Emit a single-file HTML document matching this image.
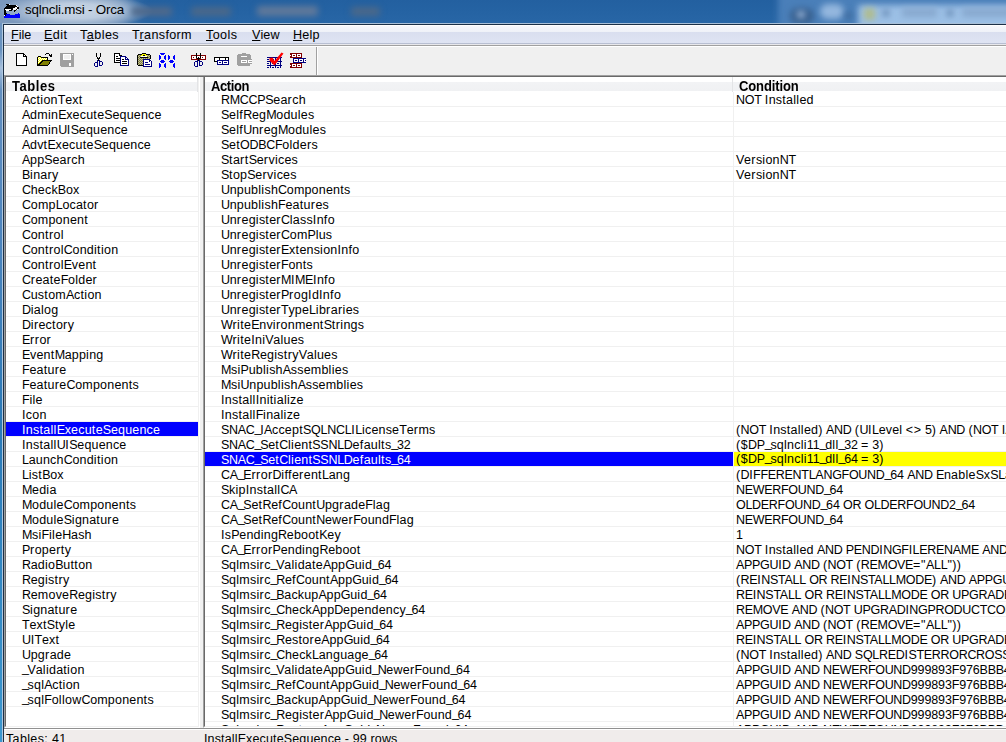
<!DOCTYPE html>
<html><head><meta charset="utf-8"><style>
*{margin:0;padding:0;box-sizing:border-box}
html,body{width:1006px;height:742px;overflow:hidden;background:#f0f0f0;font-family:"Liberation Sans",sans-serif;position:relative}
.a{position:absolute}
#title{left:0;top:0;width:1006px;height:23px;overflow:hidden;background:linear-gradient(180deg,#2360a0 0,#2563a3 12px,#2866a6 23px)}
.bl{position:absolute;filter:blur(3px)}
#title .t{left:25px;top:2px;letter-spacing:-0.2px;font-size:13.4px;color:#000;white-space:nowrap}
#frameL{left:0;top:23px;width:3px;height:719px;background:linear-gradient(180deg,#6c94c0 0,#4f86bf 200px,#2a7ab8 400px,#3d9ad2 740px)}
#frameL2{left:2px;top:23px;width:1px;height:719px;background:#b0c8e0}
#frameH{left:2px;top:23px;width:1004px;height:1px;background:#a9c0d8}
#frameD{left:3px;top:24px;width:1003px;height:1px;background:#1c3048}
#frameD2{left:3px;top:24px;width:1px;height:718px;background:#1c3048}
#menu{left:4px;top:25px;width:1002px;height:20px;background:linear-gradient(180deg,#fff 0,#fff 1px,#f7f8fc 1px,#eef1f8 7px,#d9deef 7px,#dfe4f3 18px,#b8bfd2 18px,#b8bfd2 19px,#e8e8ec 19px)}
#menu span{position:absolute;top:3px;font-size:12.6px;color:#000;white-space:nowrap}
#menu u{text-decoration:underline;text-underline-offset:1px;text-decoration-thickness:1px}
#mline{left:4px;top:45px;width:1002px;height:1px;background:#a0a0a0}
#mline2{left:4px;top:46px;width:1002px;height:1px;background:#fff}
#tsep{left:316px;top:47px;width:1px;height:28px;background:#a0a0a0}
#tsep2{left:317px;top:47px;width:1px;height:28px;background:#fff}
.pane{top:75px;height:653px;background:#fff;border-top:1px solid #a0a0a0;border-left:1px solid #a0a0a0;border-right:1px solid #fff;border-bottom:1px solid #fff;overflow:hidden}
.pin{position:absolute;left:0;top:0;right:0;bottom:0;border-top:1px solid #696969;border-left:1px solid #696969;border-right:1px solid #f0f0f0;border-bottom:1px solid #f0f0f0;overflow:hidden}
#lp{left:4px;width:196px}
#rp{left:203px;width:900px}
.hd{position:absolute;left:0;top:0;height:15px;right:0;background:linear-gradient(180deg,#fff 0,#fff 5px,#f2f3f5 5px,#f0f1f3 14px,#fff 14px)}
.hd b{position:absolute;top:0.6px;transform:scaleY(1.1);transform-origin:0 0;font-size:13px;font-weight:bold;color:#000;white-space:nowrap}
.hdv{position:absolute;top:0;width:1px;height:15px;background:#e3e4e6}
.r{position:absolute;left:0;right:0;height:15px;border-bottom:1px solid #f0f0f0;font-size:12.5px;color:#000;white-space:nowrap}
.r span{position:absolute;top:1px;line-height:14px}
i{font-style:normal}
.r.sel{background:#0000ff;color:#fff;border-bottom-color:#f0f0f0}
#rp .r span.c1{left:16px}
#rp .r span.c2{left:531px}
#rp .r.sel span.c2{left:529px;padding-left:2px;right:0;background:#ffff00;color:#000;height:14px;top:0}
.vgrid{position:absolute;top:15px;width:1px;bottom:0;background:#f0f0f0}
#lsplit{left:200px;top:75px;width:3px;height:653px;background:linear-gradient(180deg,#a0a0a0 0,#a0a0a0 1px,#696969 1px,#696969 2px,#f0f0f0 2px)}
#sb3{left:4px;top:728px;width:1002px;height:1px;background:#909090}
#sb4{left:4px;top:729px;width:1002px;height:1px;background:#fff}
#sb{left:4px;top:730px;width:1002px;height:12px;background:#f0eceb;overflow:hidden}
#sb span{position:absolute;top:2px;font-size:12.5px;color:#000;white-space:nowrap}
</style></head><body>
<div id="title" class="a">
  <div class="bl" style="left:-30px;top:-10px;width:172px;height:45px;filter:blur(5px);background:linear-gradient(90deg,#7a97bb 0,#7d9abd 130px,#6a8db6 150px,rgba(37,99,163,0) 172px)"></div>
  <div class="a" style="left:-10px;top:-12px;width:170px;height:46px;background:radial-gradient(ellipse 78px 17px at 85px 23px,rgba(200,214,230,1) 0%,rgba(192,207,225,0.95) 45%,rgba(170,190,214,0.6) 75%,rgba(140,165,198,0) 100%)"></div>
  <div class="bl" style="left:131px;top:7px;width:41px;height:9px;background:#50698a;border-radius:3px"></div>
  <div class="bl" style="left:191px;top:7px;width:40px;height:9px;background:#4b6889;border-radius:3px"></div>
  <div class="bl" style="left:257px;top:6px;width:61px;height:10px;background:#61799a;border-radius:3px"></div>
  <div class="bl" style="left:351px;top:7px;width:29px;height:9px;background:#4b6889;border-radius:3px"></div>
  <div class="bl" style="left:778px;top:-10px;width:260px;height:45px;background:#4a7fb9"></div>
  <div class="bl" style="left:858px;top:5px;width:170px;height:30px;background:#9cc0e6"></div>
  <div class="bl" style="left:790px;top:8px;width:24px;height:16px;background:#38608f;border-radius:10px"></div>
  <div class="bl" style="left:797px;top:11px;width:8px;height:7px;background:#9fbadd;border-radius:4px"></div>
  <div class="bl" style="left:820px;top:4px;width:24px;height:15px;background:#94b7de;border-radius:10px"></div>
  <div class="bl" style="left:845px;top:12px;width:7px;height:7px;background:#3f6a9c"></div>
  <div class="bl" style="left:864px;top:8px;width:11px;height:12px;background:#b0bc8c"></div>
  <div class="bl" style="left:883px;top:10px;width:6px;height:6px;background:#5e80aa"></div>
  <div class="bl" style="left:902px;top:8px;width:35px;height:9px;background:#87a8ce"></div>
  <div class="bl" style="left:947px;top:10px;width:6px;height:6px;background:#5e80aa"></div>
  <div class="bl" style="left:962px;top:8px;width:50px;height:9px;background:#87a8ce"></div>
  <svg class="a" style="left:4px;top:4px" width="16" height="14" viewBox="0 0 16 14" shape-rendering="crispEdges"><rect x="2" y="0" width="3" height="1" fill="#000"/><rect x="5" y="0" width="1" height="1" fill="#fff"/><rect x="3" y="1" width="9" height="1" fill="#000"/><rect x="12" y="1" width="1" height="1" fill="#fff"/><rect x="2" y="2" width="11" height="1" fill="#000"/><rect x="13" y="2" width="1" height="1" fill="#fff"/><rect x="1" y="3" width="10" height="1" fill="#000"/><rect x="11" y="3" width="2" height="1" fill="#fff"/><rect x="13" y="3" width="2" height="1" fill="#000"/><rect x="0" y="4" width="9" height="1" fill="#000"/><rect x="9" y="4" width="4" height="1" fill="#fff"/><rect x="13" y="4" width="2" height="1" fill="#000"/><rect x="0" y="5" width="1" height="1" fill="#000"/><rect x="1" y="5" width="6" height="1" fill="#fff"/><rect x="7" y="5" width="2" height="1" fill="#000"/><rect x="9" y="5" width="3" height="1" fill="#fff"/><rect x="12" y="5" width="1" height="1" fill="#000"/><rect x="13" y="5" width="1" height="1" fill="#fff"/><rect x="0" y="6" width="2" height="1" fill="#000"/><rect x="2" y="6" width="3" height="1" fill="#fff"/><rect x="5" y="6" width="3" height="1" fill="#000"/><rect x="10" y="6" width="2" height="1" fill="#000"/><rect x="0" y="7" width="2" height="1" fill="#000"/><rect x="10" y="7" width="1" height="1" fill="#000"/><rect x="0" y="8" width="2" height="1" fill="#000"/><rect x="0" y="9" width="3" height="1" fill="#000"/><rect x="14" y="9" width="1" height="1" fill="#0000ff"/><rect x="0" y="10" width="2" height="1" fill="#000"/><rect x="2" y="10" width="4" height="1" fill="#0000ff"/><rect x="11" y="10" width="5" height="1" fill="#0000ff"/><rect x="0" y="11" width="1" height="1" fill="#fff"/><rect x="1" y="11" width="1" height="1" fill="#000"/><rect x="2" y="11" width="14" height="1" fill="#0000ff"/><rect x="0" y="12" width="16" height="1" fill="#0000ff"/><rect x="0" y="13" width="16" height="1" fill="#0000ff"/></svg>
  <div class="a t">sqlncli.msi - Orca</div>
</div>
<div id="frameL" class="a"></div>
<div class="a" style="left:0;top:50px;width:2px;height:40px;background:linear-gradient(180deg,rgba(168,192,220,0) 0,#a6bfdc 45%,rgba(168,192,220,0) 100%)"></div>
<div id="frameL2" class="a"></div>
<div id="frameH" class="a"></div>
<div id="frameD" class="a"></div>
<div id="frameD2" class="a"></div>
<div id="menu" class="a">
  <span style="left:7px"><u>F</u>ile</span>
  <span style="left:40px;letter-spacing:0.4px"><u>E</u>dit</span>
  <span style="left:76px;letter-spacing:0.45px">T<u>a</u>bles</span>
  <span style="left:128px;letter-spacing:0.33px">T<u>r</u>ansform</span>
  <span style="left:202px;letter-spacing:0.4px"><u>T</u>ools</span>
  <span style="left:248px;letter-spacing:0.2px"><u>V</u>iew</span>
  <span style="left:289px;letter-spacing:0.2px"><u>H</u>elp</span>
</div>
<div id="mline" class="a"></div>
<div id="mline2" class="a"></div>
<svg class="a" style="left:0;top:47px" width="320" height="28" viewBox="0 47 320 28" shape-rendering="crispEdges"><rect x="17" y="54" width="9" height="11" fill="#fff"/><rect x="16" y="53" width="8" height="1" fill="#000"/><rect x="16" y="53" width="1" height="13" fill="#000"/><rect x="16" y="65" width="11" height="1" fill="#000"/><rect x="26" y="56" width="1" height="10" fill="#000"/><rect x="23" y="53" width="3" height="3" fill="#f0f0f0"/><rect x="24" y="53" width="1" height="1" fill="#f0f0f0"/><rect x="23" y="53" width="1" height="4" fill="#000"/><rect x="23" y="56" width="4" height="1" fill="#000"/><rect x="24" y="54" width="1" height="1" fill="#000"/><rect x="25" y="55" width="1" height="1" fill="#000"/><rect x="24" y="55" width="1" height="1" fill="#fff"/><rect x="45" y="54" width="1" height="1" fill="#000"/><rect x="46" y="53" width="1" height="1" fill="#000"/><rect x="47" y="53" width="1" height="1" fill="#000"/><rect x="48" y="53" width="1" height="1" fill="#000"/><rect x="49" y="54" width="1" height="1" fill="#000"/><rect x="49" y="55" width="3" height="1" fill="#000"/><rect x="50" y="56" width="2" height="1" fill="#000"/><rect x="51" y="54" width="1" height="1" fill="#000"/><rect x="38" y="57" width="9" height="7" fill="#ffff00"/><rect x="39" y="57" width="1" height="1" fill="#fff"/><rect x="41" y="57" width="1" height="1" fill="#fff"/><rect x="43" y="57" width="1" height="1" fill="#fff"/><rect x="45" y="57" width="1" height="1" fill="#fff"/><rect x="38" y="58" width="1" height="1" fill="#fff"/><rect x="40" y="58" width="1" height="1" fill="#fff"/><rect x="42" y="58" width="1" height="1" fill="#fff"/><rect x="44" y="58" width="1" height="1" fill="#fff"/><rect x="46" y="58" width="1" height="1" fill="#fff"/><rect x="39" y="59" width="1" height="1" fill="#fff"/><rect x="41" y="59" width="1" height="1" fill="#fff"/><rect x="43" y="59" width="1" height="1" fill="#fff"/><rect x="45" y="59" width="1" height="1" fill="#fff"/><rect x="38" y="60" width="1" height="1" fill="#fff"/><rect x="40" y="60" width="1" height="1" fill="#fff"/><rect x="42" y="60" width="1" height="1" fill="#fff"/><rect x="44" y="60" width="1" height="1" fill="#fff"/><rect x="46" y="60" width="1" height="1" fill="#fff"/><rect x="39" y="61" width="1" height="1" fill="#fff"/><rect x="41" y="61" width="1" height="1" fill="#fff"/><rect x="43" y="61" width="1" height="1" fill="#fff"/><rect x="45" y="61" width="1" height="1" fill="#fff"/><rect x="38" y="62" width="1" height="1" fill="#fff"/><rect x="40" y="62" width="1" height="1" fill="#fff"/><rect x="42" y="62" width="1" height="1" fill="#fff"/><rect x="44" y="62" width="1" height="1" fill="#fff"/><rect x="46" y="62" width="1" height="1" fill="#fff"/><rect x="39" y="63" width="1" height="1" fill="#fff"/><rect x="41" y="63" width="1" height="1" fill="#fff"/><rect x="43" y="63" width="1" height="1" fill="#fff"/><rect x="45" y="63" width="1" height="1" fill="#fff"/><rect x="37" y="57" width="1" height="9" fill="#000"/><rect x="38" y="56" width="3" height="1" fill="#000"/><rect x="41" y="57" width="7" height="1" fill="#000"/><rect x="47" y="57" width="1" height="4" fill="#000"/><polygon points="42,60 52,60 48,66 37,66" fill="#000"/><polygon points="43,61 50.5,61 47.5,65 39.5,65" fill="#808000"/><rect x="60" y="53" width="14" height="14" fill="#a0a0a0"/><rect x="60" y="66" width="1" height="1" fill="#f0f0f0"/><rect x="63" y="54" width="8" height="6" fill="#f0f0f0"/><rect x="63" y="54" width="8" height="1" fill="#fff"/><rect x="63" y="59" width="8" height="1" fill="#fff"/><rect x="63" y="54" width="1" height="6" fill="#fff"/><rect x="70" y="54" width="1" height="6" fill="#fff"/><rect x="72" y="54" width="1" height="1" fill="#fff"/><rect x="69" y="63" width="2" height="3" fill="#fff"/><rect x="96" y="53" width="1" height="4" fill="#000"/><rect x="100" y="53" width="1" height="4" fill="#000"/><rect x="97" y="57" width="1" height="1" fill="#000"/><rect x="99" y="57" width="1" height="1" fill="#000"/><rect x="97" y="58" width="1" height="1" fill="#000"/><rect x="99" y="58" width="1" height="1" fill="#000"/><rect x="98" y="58" width="1" height="3" fill="#000"/><rect x="97" y="60" width="1" height="2" fill="#000080"/><rect x="99" y="60" width="1" height="1" fill="#000080"/><rect x="94" y="62" width="4" height="1" fill="#000080"/><rect x="94" y="66" width="4" height="1" fill="#000080"/><rect x="94" y="62" width="1" height="5" fill="#000080"/><rect x="97" y="62" width="1" height="5" fill="#000080"/><rect x="94" y="62" width="1" height="1" fill="#f0f0f0"/><rect x="94" y="66" width="1" height="1" fill="#f0f0f0"/><rect x="99" y="61" width="4" height="1" fill="#000080"/><rect x="99" y="65" width="4" height="1" fill="#000080"/><rect x="99" y="61" width="1" height="5" fill="#000080"/><rect x="102" y="61" width="1" height="5" fill="#000080"/><rect x="102" y="61" width="1" height="1" fill="#f0f0f0"/><rect x="102" y="65" width="1" height="1" fill="#f0f0f0"/><rect x="114" y="53" width="8" height="10" fill="#fff"/><rect x="114" y="53" width="8" height="1" fill="#000"/><rect x="114" y="62" width="8" height="1" fill="#000"/><rect x="114" y="53" width="1" height="10" fill="#000"/><rect x="121" y="53" width="1" height="10" fill="#000"/><rect x="120" y="53" width="2" height="2" fill="#f0f0f0"/><rect x="119" y="54" width="1" height="1" fill="#000"/><rect x="120" y="55" width="1" height="1" fill="#000"/><rect x="119" y="53" width="1" height="3" fill="#000"/><rect x="116" y="56" width="2" height="1" fill="#000"/><rect x="116" y="58" width="4" height="1" fill="#000"/><rect x="116" y="60" width="4" height="1" fill="#000"/><rect x="120" y="56" width="9" height="10" fill="#fff"/><rect x="120" y="56" width="9" height="1" fill="#000080"/><rect x="120" y="65" width="9" height="1" fill="#000080"/><rect x="120" y="56" width="1" height="10" fill="#000080"/><rect x="128" y="56" width="1" height="10" fill="#000080"/><rect x="126" y="56" width="3" height="3" fill="#f0f0f0"/><rect x="126" y="57" width="1" height="1" fill="#000080"/><rect x="127" y="58" width="1" height="1" fill="#000080"/><rect x="125" y="56" width="1" height="4" fill="#000080"/><rect x="125" y="59" width="4" height="1" fill="#000080"/><rect x="126" y="58" width="1" height="1" fill="#fff"/><rect x="122" y="59" width="2" height="1" fill="#000"/><rect x="122" y="61" width="5" height="1" fill="#000"/><rect x="122" y="63" width="5" height="1" fill="#000"/><rect x="138" y="55" width="12" height="10" fill="#848030"/><rect x="139" y="55" width="1" height="1" fill="#b8b8a0"/><rect x="141" y="55" width="1" height="1" fill="#b8b8a0"/><rect x="143" y="55" width="1" height="1" fill="#b8b8a0"/><rect x="145" y="55" width="1" height="1" fill="#b8b8a0"/><rect x="147" y="55" width="1" height="1" fill="#b8b8a0"/><rect x="149" y="55" width="1" height="1" fill="#b8b8a0"/><rect x="138" y="56" width="1" height="1" fill="#b8b8a0"/><rect x="140" y="56" width="1" height="1" fill="#b8b8a0"/><rect x="142" y="56" width="1" height="1" fill="#b8b8a0"/><rect x="144" y="56" width="1" height="1" fill="#b8b8a0"/><rect x="146" y="56" width="1" height="1" fill="#b8b8a0"/><rect x="148" y="56" width="1" height="1" fill="#b8b8a0"/><rect x="139" y="57" width="1" height="1" fill="#b8b8a0"/><rect x="141" y="57" width="1" height="1" fill="#b8b8a0"/><rect x="143" y="57" width="1" height="1" fill="#b8b8a0"/><rect x="145" y="57" width="1" height="1" fill="#b8b8a0"/><rect x="147" y="57" width="1" height="1" fill="#b8b8a0"/><rect x="149" y="57" width="1" height="1" fill="#b8b8a0"/><rect x="138" y="58" width="1" height="1" fill="#b8b8a0"/><rect x="140" y="58" width="1" height="1" fill="#b8b8a0"/><rect x="142" y="58" width="1" height="1" fill="#b8b8a0"/><rect x="144" y="58" width="1" height="1" fill="#b8b8a0"/><rect x="146" y="58" width="1" height="1" fill="#b8b8a0"/><rect x="148" y="58" width="1" height="1" fill="#b8b8a0"/><rect x="139" y="59" width="1" height="1" fill="#b8b8a0"/><rect x="141" y="59" width="1" height="1" fill="#b8b8a0"/><rect x="143" y="59" width="1" height="1" fill="#b8b8a0"/><rect x="145" y="59" width="1" height="1" fill="#b8b8a0"/><rect x="147" y="59" width="1" height="1" fill="#b8b8a0"/><rect x="149" y="59" width="1" height="1" fill="#b8b8a0"/><rect x="138" y="60" width="1" height="1" fill="#b8b8a0"/><rect x="140" y="60" width="1" height="1" fill="#b8b8a0"/><rect x="142" y="60" width="1" height="1" fill="#b8b8a0"/><rect x="144" y="60" width="1" height="1" fill="#b8b8a0"/><rect x="146" y="60" width="1" height="1" fill="#b8b8a0"/><rect x="148" y="60" width="1" height="1" fill="#b8b8a0"/><rect x="139" y="61" width="1" height="1" fill="#b8b8a0"/><rect x="141" y="61" width="1" height="1" fill="#b8b8a0"/><rect x="143" y="61" width="1" height="1" fill="#b8b8a0"/><rect x="145" y="61" width="1" height="1" fill="#b8b8a0"/><rect x="147" y="61" width="1" height="1" fill="#b8b8a0"/><rect x="149" y="61" width="1" height="1" fill="#b8b8a0"/><rect x="138" y="62" width="1" height="1" fill="#b8b8a0"/><rect x="140" y="62" width="1" height="1" fill="#b8b8a0"/><rect x="142" y="62" width="1" height="1" fill="#b8b8a0"/><rect x="144" y="62" width="1" height="1" fill="#b8b8a0"/><rect x="146" y="62" width="1" height="1" fill="#b8b8a0"/><rect x="148" y="62" width="1" height="1" fill="#b8b8a0"/><rect x="139" y="63" width="1" height="1" fill="#b8b8a0"/><rect x="141" y="63" width="1" height="1" fill="#b8b8a0"/><rect x="143" y="63" width="1" height="1" fill="#b8b8a0"/><rect x="145" y="63" width="1" height="1" fill="#b8b8a0"/><rect x="147" y="63" width="1" height="1" fill="#b8b8a0"/><rect x="149" y="63" width="1" height="1" fill="#b8b8a0"/><rect x="138" y="64" width="1" height="1" fill="#b8b8a0"/><rect x="140" y="64" width="1" height="1" fill="#b8b8a0"/><rect x="142" y="64" width="1" height="1" fill="#b8b8a0"/><rect x="144" y="64" width="1" height="1" fill="#b8b8a0"/><rect x="146" y="64" width="1" height="1" fill="#b8b8a0"/><rect x="148" y="64" width="1" height="1" fill="#b8b8a0"/><rect x="137" y="55" width="1" height="10" fill="#000"/><rect x="138" y="54" width="4" height="1" fill="#000"/><rect x="142" y="53" width="4" height="1" fill="#000"/><rect x="146" y="54" width="4" height="1" fill="#000"/><rect x="150" y="55" width="1" height="5" fill="#000"/><rect x="138" y="65" width="5" height="1" fill="#000"/><rect x="142" y="54" width="4" height="1" fill="#ffff00"/><rect x="141" y="55" width="2" height="1" fill="#ffff00"/><rect x="145" y="55" width="2" height="1" fill="#ffff00"/><rect x="143" y="55" width="2" height="1" fill="#000"/><rect x="141" y="56" width="6" height="1" fill="#fff"/><rect x="140" y="57" width="8" height="1" fill="#000"/><rect x="143" y="59" width="9" height="8" fill="#fff"/><rect x="143" y="59" width="9" height="1" fill="#000080"/><rect x="143" y="66" width="9" height="1" fill="#000080"/><rect x="143" y="59" width="1" height="8" fill="#000080"/><rect x="151" y="59" width="1" height="8" fill="#000080"/><rect x="150" y="59" width="2" height="2" fill="#f0f0f0"/><rect x="150" y="60" width="1" height="1" fill="#000080"/><rect x="151" y="61" width="1" height="1" fill="#000080"/><rect x="149" y="59" width="1" height="3" fill="#000080"/><rect x="149" y="61" width="3" height="1" fill="#000080"/><rect x="150" y="61" width="1" height="1" fill="#fff"/><rect x="145" y="62" width="3" height="1" fill="#000080"/><rect x="145" y="64" width="5" height="1" fill="#000080"/><rect x="160" y="53" width="5" height="1" fill="#0000ff"/><rect x="161" y="54" width="3" height="1" fill="#0000ff"/><rect x="159" y="55" width="1" height="5" fill="#0000ff"/><rect x="160" y="56" width="1" height="3" fill="#0000ff"/><rect x="165" y="55" width="1" height="5" fill="#0000ff"/><rect x="164" y="56" width="1" height="3" fill="#0000ff"/><rect x="161" y="60" width="3" height="1" fill="#0000ff"/><rect x="160" y="61" width="5" height="1" fill="#0000ff"/><rect x="161" y="62" width="3" height="1" fill="#0000ff"/><rect x="159" y="63" width="1" height="5" fill="#0000ff"/><rect x="160" y="64" width="1" height="3" fill="#0000ff"/><rect x="165" y="63" width="1" height="5" fill="#0000ff"/><rect x="164" y="64" width="1" height="3" fill="#0000ff"/><rect x="168" y="55" width="1" height="5" fill="#0000ff"/><rect x="169" y="56" width="1" height="3" fill="#0000ff"/><rect x="174" y="55" width="1" height="5" fill="#0000ff"/><rect x="173" y="56" width="1" height="3" fill="#0000ff"/><rect x="170" y="60" width="3" height="1" fill="#0000ff"/><rect x="169" y="61" width="5" height="1" fill="#0000ff"/><rect x="170" y="62" width="3" height="1" fill="#0000ff"/><rect x="174" y="63" width="1" height="5" fill="#0000ff"/><rect x="173" y="64" width="1" height="3" fill="#0000ff"/><rect x="191" y="55" width="15" height="5" fill="#fff"/><rect x="191" y="55" width="15" height="1" fill="#800000"/><rect x="191" y="59" width="15" height="1" fill="#800000"/><rect x="191" y="55" width="1" height="5" fill="#800000"/><rect x="205" y="55" width="1" height="5" fill="#800000"/><rect x="196" y="55" width="1" height="5" fill="#800000"/><rect x="200" y="55" width="1" height="5" fill="#800000"/><rect x="193" y="57" width="1" height="1" fill="#800000"/><rect x="202" y="57" width="1" height="1" fill="#800000"/><rect x="205" y="57" width="1" height="1" fill="#800000"/><rect x="197" y="57" width="2" height="1" fill="#800000"/><rect x="196" y="53" width="1" height="5" fill="#000"/><rect x="200" y="53" width="1" height="5" fill="#000"/><rect x="197" y="58" width="1" height="1" fill="#000"/><rect x="199" y="58" width="1" height="1" fill="#000"/><rect x="198" y="58" width="1" height="3" fill="#000"/><rect x="197" y="57" width="3" height="1" fill="#fff"/><rect x="198" y="57" width="1" height="1" fill="#000"/><rect x="197" y="60" width="1" height="2" fill="#000080"/><rect x="199" y="60" width="1" height="1" fill="#000080"/><rect x="194" y="61" width="4" height="1" fill="#000080"/><rect x="194" y="66" width="4" height="1" fill="#000080"/><rect x="194" y="61" width="1" height="6" fill="#000080"/><rect x="197" y="61" width="1" height="6" fill="#000080"/><rect x="194" y="61" width="1" height="1" fill="#f0f0f0"/><rect x="194" y="66" width="1" height="1" fill="#f0f0f0"/><rect x="199" y="61" width="4" height="1" fill="#000080"/><rect x="199" y="65" width="4" height="1" fill="#000080"/><rect x="199" y="61" width="1" height="5" fill="#000080"/><rect x="202" y="61" width="1" height="5" fill="#000080"/><rect x="202" y="61" width="1" height="1" fill="#f0f0f0"/><rect x="202" y="65" width="1" height="1" fill="#f0f0f0"/><rect x="214" y="57" width="15" height="5" fill="#fff"/><rect x="214" y="57" width="15" height="1" fill="#000"/><rect x="214" y="61" width="15" height="1" fill="#000"/><rect x="214" y="57" width="1" height="5" fill="#000"/><rect x="228" y="57" width="1" height="5" fill="#000"/><rect x="219" y="57" width="1" height="4" fill="#000"/><rect x="225" y="57" width="1" height="4" fill="#000"/><rect x="217" y="60" width="12" height="5" fill="#fff"/><rect x="217" y="60" width="12" height="1" fill="#000080"/><rect x="217" y="64" width="12" height="1" fill="#000080"/><rect x="217" y="60" width="1" height="5" fill="#000080"/><rect x="228" y="60" width="1" height="5" fill="#000080"/><rect x="222" y="60" width="1" height="5" fill="#000080"/><rect x="219" y="62" width="2" height="1" fill="#000080"/><rect x="224" y="62" width="3" height="1" fill="#000080"/><rect x="238" y="54" width="12" height="12" fill="#a0a0a0"/><rect x="237" y="55" width="1" height="10" fill="#a0a0a0"/><rect x="250" y="55" width="1" height="4" fill="#a0a0a0"/><rect x="242" y="53" width="4" height="1" fill="#a0a0a0"/><rect x="241" y="56" width="6" height="1" fill="#fff"/><rect x="238" y="59" width="14" height="5" fill="#a0a0a0"/><rect x="241" y="60" width="6" height="3" fill="#fff"/><rect x="242" y="61" width="4" height="1" fill="#a0a0a0"/><rect x="248" y="60" width="4" height="3" fill="#fff"/><rect x="249" y="61" width="3" height="1" fill="#a0a0a0"/><rect x="267" y="57" width="15" height="1" fill="#000080"/><rect x="267" y="61" width="15" height="1" fill="#000080"/><rect x="267" y="65" width="15" height="1" fill="#000080"/><rect x="270" y="57" width="1" height="11" fill="#000080"/><rect x="275" y="57" width="1" height="11" fill="#000080"/><rect x="280" y="57" width="1" height="11" fill="#000080"/><rect x="267" y="59" width="2" height="1" fill="#000080"/><rect x="267" y="63" width="2" height="1" fill="#000080"/><rect x="267" y="67" width="2" height="1" fill="#000080"/><rect x="272" y="59" width="2" height="1" fill="#000080"/><rect x="272" y="63" width="2" height="1" fill="#000080"/><rect x="272" y="67" width="2" height="1" fill="#000080"/><rect x="277" y="59" width="2" height="1" fill="#000080"/><rect x="277" y="63" width="2" height="1" fill="#000080"/><rect x="277" y="67" width="2" height="1" fill="#000080"/><polygon points="269.5,58 272.5,57.5 274.5,61 281.5,52.5 283.5,53.5 274.5,65.5 269.5,60.5" fill="#ff0000" shape-rendering="auto"/><rect x="290" y="53" width="12" height="5" fill="#800000"/><rect x="292" y="54" width="4" height="3" fill="#fff"/><rect x="297" y="54" width="4" height="3" fill="#fff"/><rect x="293" y="55" width="2" height="1" fill="#800000"/><rect x="298" y="55" width="2" height="1" fill="#800000"/><rect x="290" y="55" width="1" height="1" fill="#fff"/><rect x="290" y="63" width="12" height="5" fill="#800000"/><rect x="292" y="64" width="4" height="3" fill="#fff"/><rect x="297" y="64" width="4" height="3" fill="#fff"/><rect x="293" y="65" width="2" height="1" fill="#800000"/><rect x="298" y="65" width="2" height="1" fill="#800000"/><rect x="290" y="65" width="1" height="1" fill="#fff"/><rect x="293" y="58" width="13" height="5" fill="#000080"/><rect x="294" y="59" width="4" height="3" fill="#fff"/><rect x="299" y="59" width="4" height="3" fill="#fff"/><rect x="304" y="59" width="2" height="3" fill="#fff"/><rect x="295" y="60" width="2" height="1" fill="#000080"/><rect x="300" y="60" width="2" height="1" fill="#000080"/><rect x="305" y="60" width="1" height="1" fill="#000080"/></svg>
<div id="tsep" class="a"></div>
<div id="tsep2" class="a"></div>
<div id="lsplit" class="a"></div>
<div id="lp" class="a pane"><div class="pin">
  <div class="hd"><b style="left:6px;letter-spacing:0.55px">Tables</b></div>
  <div class="hdv" style="left:191px"></div>
<div class="r" style="top:15px"><span style="left:16px"><i style="letter-spacing:-0.28px">A</i><i style="letter-spacing:0.16px">c</i><i style="letter-spacing:0.37px">ti</i><i style="letter-spacing:0.18px">on</i><i style="letter-spacing:-0.26px">T</i><i style="letter-spacing:0.17px">ex</i><i style="letter-spacing:0.41px">t</i></span></div>
<div class="r" style="top:30px"><span style="left:16px"><i style="letter-spacing:-0.28px">A</i><i style="letter-spacing:0.23px">dm</i><i style="letter-spacing:0.33px">i</i><i style="letter-spacing:0.18px">n</i><i style="letter-spacing:-0.28px">E</i><i style="letter-spacing:0.17px">xecu</i><i style="letter-spacing:0.41px">t</i><i style="letter-spacing:0.18px">e</i><i style="letter-spacing:-0.28px">S</i><i style="letter-spacing:0.18px">equence</i></span></div>
<div class="r" style="top:45px"><span style="left:16px"><i style="letter-spacing:-0.28px">A</i><i style="letter-spacing:0.23px">dm</i><i style="letter-spacing:0.33px">i</i><i style="letter-spacing:0.18px">n</i><i style="letter-spacing:-0.31px">U</i><i style="letter-spacing:0.36px">I</i><i style="letter-spacing:-0.28px">S</i><i style="letter-spacing:0.18px">equence</i></span></div>
<div class="r" style="top:60px"><span style="left:16px"><i style="letter-spacing:-0.28px">A</i><i style="letter-spacing:0.17px">dv</i><i style="letter-spacing:0.41px">t</i><i style="letter-spacing:-0.28px">E</i><i style="letter-spacing:0.17px">xecu</i><i style="letter-spacing:0.41px">t</i><i style="letter-spacing:0.18px">e</i><i style="letter-spacing:-0.28px">S</i><i style="letter-spacing:0.18px">equence</i></span></div>
<div class="r" style="top:75px"><span style="left:16px"><i style="letter-spacing:-0.28px">A</i><i style="letter-spacing:0.18px">pp</i><i style="letter-spacing:-0.28px">S</i><i style="letter-spacing:0.18px">ea</i><i style="letter-spacing:0.50px">r</i><i style="letter-spacing:0.17px">ch</i></span></div>
<div class="r" style="top:90px"><span style="left:16px"><i style="letter-spacing:-0.28px">B</i><i style="letter-spacing:0.33px">i</i><i style="letter-spacing:0.18px">na</i><i style="letter-spacing:0.50px">r</i><i style="letter-spacing:0.16px">y</i></span></div>
<div class="r" style="top:105px"><span style="left:16px"><i style="letter-spacing:-0.31px">C</i><i style="letter-spacing:0.17px">heck</i><i style="letter-spacing:-0.28px">B</i><i style="letter-spacing:0.17px">ox</i></span></div>
<div class="r" style="top:120px"><span style="left:16px"><i style="letter-spacing:-0.31px">C</i><i style="letter-spacing:0.21px">omp</i><i style="letter-spacing:-0.24px">L</i><i style="letter-spacing:0.17px">oca</i><i style="letter-spacing:0.41px">t</i><i style="letter-spacing:0.18px">o</i><i style="letter-spacing:0.50px">r</i></span></div>
<div class="r" style="top:135px"><span style="left:16px"><i style="letter-spacing:-0.31px">C</i><i style="letter-spacing:0.19px">omponen</i><i style="letter-spacing:0.41px">t</i></span></div>
<div class="r" style="top:150px"><span style="left:16px"><i style="letter-spacing:-0.31px">C</i><i style="letter-spacing:0.18px">on</i><i style="letter-spacing:0.45px">tr</i><i style="letter-spacing:0.18px">o</i><i style="letter-spacing:0.33px">l</i></span></div>
<div class="r" style="top:165px"><span style="left:16px"><i style="letter-spacing:-0.31px">C</i><i style="letter-spacing:0.18px">on</i><i style="letter-spacing:0.45px">tr</i><i style="letter-spacing:0.18px">o</i><i style="letter-spacing:0.33px">l</i><i style="letter-spacing:-0.31px">C</i><i style="letter-spacing:0.18px">ond</i><i style="letter-spacing:0.36px">iti</i><i style="letter-spacing:0.18px">on</i></span></div>
<div class="r" style="top:180px"><span style="left:16px"><i style="letter-spacing:-0.31px">C</i><i style="letter-spacing:0.18px">on</i><i style="letter-spacing:0.45px">tr</i><i style="letter-spacing:0.18px">o</i><i style="letter-spacing:0.33px">l</i><i style="letter-spacing:-0.28px">E</i><i style="letter-spacing:0.17px">ven</i><i style="letter-spacing:0.41px">t</i></span></div>
<div class="r" style="top:195px"><span style="left:16px"><i style="letter-spacing:-0.31px">C</i><i style="letter-spacing:0.50px">r</i><i style="letter-spacing:0.18px">ea</i><i style="letter-spacing:0.41px">t</i><i style="letter-spacing:0.18px">e</i><i style="letter-spacing:-0.26px">F</i><i style="letter-spacing:0.18px">o</i><i style="letter-spacing:0.33px">l</i><i style="letter-spacing:0.18px">de</i><i style="letter-spacing:0.50px">r</i></span></div>
<div class="r" style="top:210px"><span style="left:16px"><i style="letter-spacing:-0.31px">C</i><i style="letter-spacing:0.17px">us</i><i style="letter-spacing:0.41px">t</i><i style="letter-spacing:0.23px">om</i><i style="letter-spacing:-0.28px">A</i><i style="letter-spacing:0.16px">c</i><i style="letter-spacing:0.37px">ti</i><i style="letter-spacing:0.18px">on</i></span></div>
<div class="r" style="top:225px"><span style="left:16px"><i style="letter-spacing:-0.31px">D</i><i style="letter-spacing:0.33px">i</i><i style="letter-spacing:0.18px">a</i><i style="letter-spacing:0.33px">l</i><i style="letter-spacing:0.18px">og</i></span></div>
<div class="r" style="top:240px"><span style="left:16px"><i style="letter-spacing:-0.31px">D</i><i style="letter-spacing:0.41px">ir</i><i style="letter-spacing:0.17px">ec</i><i style="letter-spacing:0.41px">t</i><i style="letter-spacing:0.18px">o</i><i style="letter-spacing:0.50px">r</i><i style="letter-spacing:0.16px">y</i></span></div>
<div class="r" style="top:255px"><span style="left:16px"><i style="letter-spacing:-0.28px">E</i><i style="letter-spacing:0.50px">rr</i><i style="letter-spacing:0.18px">o</i><i style="letter-spacing:0.50px">r</i></span></div>
<div class="r" style="top:270px"><span style="left:16px"><i style="letter-spacing:-0.28px">E</i><i style="letter-spacing:0.17px">ven</i><i style="letter-spacing:0.41px">t</i><i style="letter-spacing:-0.35px">M</i><i style="letter-spacing:0.18px">app</i><i style="letter-spacing:0.33px">i</i><i style="letter-spacing:0.18px">ng</i></span></div>
<div class="r" style="top:285px"><span style="left:16px"><i style="letter-spacing:-0.26px">F</i><i style="letter-spacing:0.18px">ea</i><i style="letter-spacing:0.41px">t</i><i style="letter-spacing:0.18px">u</i><i style="letter-spacing:0.50px">r</i><i style="letter-spacing:0.18px">e</i></span></div>
<div class="r" style="top:300px"><span style="left:16px"><i style="letter-spacing:-0.26px">F</i><i style="letter-spacing:0.18px">ea</i><i style="letter-spacing:0.41px">t</i><i style="letter-spacing:0.18px">u</i><i style="letter-spacing:0.50px">r</i><i style="letter-spacing:0.18px">e</i><i style="letter-spacing:-0.31px">C</i><i style="letter-spacing:0.19px">omponen</i><i style="letter-spacing:0.41px">t</i><i style="letter-spacing:0.16px">s</i></span></div>
<div class="r" style="top:315px"><span style="left:16px"><i style="letter-spacing:-0.26px">F</i><i style="letter-spacing:0.33px">il</i><i style="letter-spacing:0.18px">e</i></span></div>
<div class="r" style="top:330px"><span style="left:16px"><i style="letter-spacing:0.36px">I</i><i style="letter-spacing:0.17px">con</i></span></div>
<div class="r sel" style="top:345px"><span style="left:16px"><i style="letter-spacing:0.36px">I</i><i style="letter-spacing:0.17px">ns</i><i style="letter-spacing:0.41px">t</i><i style="letter-spacing:0.18px">a</i><i style="letter-spacing:0.33px">ll</i><i style="letter-spacing:-0.28px">E</i><i style="letter-spacing:0.17px">xecu</i><i style="letter-spacing:0.41px">t</i><i style="letter-spacing:0.18px">e</i><i style="letter-spacing:-0.28px">S</i><i style="letter-spacing:0.18px">equence</i></span></div>
<div class="r" style="top:360px"><span style="left:16px"><i style="letter-spacing:0.36px">I</i><i style="letter-spacing:0.17px">ns</i><i style="letter-spacing:0.41px">t</i><i style="letter-spacing:0.18px">a</i><i style="letter-spacing:0.33px">ll</i><i style="letter-spacing:-0.31px">U</i><i style="letter-spacing:0.36px">I</i><i style="letter-spacing:-0.28px">S</i><i style="letter-spacing:0.18px">equence</i></span></div>
<div class="r" style="top:375px"><span style="left:16px"><i style="letter-spacing:-0.24px">L</i><i style="letter-spacing:0.18px">aunch</i><i style="letter-spacing:-0.31px">C</i><i style="letter-spacing:0.18px">ond</i><i style="letter-spacing:0.36px">iti</i><i style="letter-spacing:0.18px">on</i></span></div>
<div class="r" style="top:390px"><span style="left:16px"><i style="letter-spacing:-0.24px">L</i><i style="letter-spacing:0.33px">i</i><i style="letter-spacing:0.16px">s</i><i style="letter-spacing:0.41px">t</i><i style="letter-spacing:-0.28px">B</i><i style="letter-spacing:0.17px">ox</i></span></div>
<div class="r" style="top:405px"><span style="left:16px"><i style="letter-spacing:-0.35px">M</i><i style="letter-spacing:0.18px">ed</i><i style="letter-spacing:0.33px">i</i><i style="letter-spacing:0.18px">a</i></span></div>
<div class="r" style="top:420px"><span style="left:16px"><i style="letter-spacing:-0.35px">M</i><i style="letter-spacing:0.18px">odu</i><i style="letter-spacing:0.33px">l</i><i style="letter-spacing:0.18px">e</i><i style="letter-spacing:-0.31px">C</i><i style="letter-spacing:0.19px">omponen</i><i style="letter-spacing:0.41px">t</i><i style="letter-spacing:0.16px">s</i></span></div>
<div class="r" style="top:435px"><span style="left:16px"><i style="letter-spacing:-0.35px">M</i><i style="letter-spacing:0.18px">odu</i><i style="letter-spacing:0.33px">l</i><i style="letter-spacing:0.18px">e</i><i style="letter-spacing:-0.28px">S</i><i style="letter-spacing:0.33px">i</i><i style="letter-spacing:0.18px">gna</i><i style="letter-spacing:0.41px">t</i><i style="letter-spacing:0.18px">u</i><i style="letter-spacing:0.50px">r</i><i style="letter-spacing:0.18px">e</i></span></div>
<div class="r" style="top:450px"><span style="left:16px"><i style="letter-spacing:-0.35px">M</i><i style="letter-spacing:0.16px">s</i><i style="letter-spacing:0.33px">i</i><i style="letter-spacing:-0.26px">F</i><i style="letter-spacing:0.33px">il</i><i style="letter-spacing:0.18px">e</i><i style="letter-spacing:-0.31px">H</i><i style="letter-spacing:0.17px">ash</i></span></div>
<div class="r" style="top:465px"><span style="left:16px"><i style="letter-spacing:-0.28px">P</i><i style="letter-spacing:0.50px">r</i><i style="letter-spacing:0.18px">ope</i><i style="letter-spacing:0.45px">rt</i><i style="letter-spacing:0.16px">y</i></span></div>
<div class="r" style="top:480px"><span style="left:16px"><i style="letter-spacing:-0.31px">R</i><i style="letter-spacing:0.18px">ad</i><i style="letter-spacing:0.33px">i</i><i style="letter-spacing:0.18px">o</i><i style="letter-spacing:-0.28px">B</i><i style="letter-spacing:0.18px">u</i><i style="letter-spacing:0.41px">tt</i><i style="letter-spacing:0.18px">on</i></span></div>
<div class="r" style="top:495px"><span style="left:16px"><i style="letter-spacing:-0.31px">R</i><i style="letter-spacing:0.18px">eg</i><i style="letter-spacing:0.33px">i</i><i style="letter-spacing:0.16px">s</i><i style="letter-spacing:0.45px">tr</i><i style="letter-spacing:0.16px">y</i></span></div>
<div class="r" style="top:510px"><span style="left:16px"><i style="letter-spacing:-0.31px">R</i><i style="letter-spacing:0.20px">emove</i><i style="letter-spacing:-0.31px">R</i><i style="letter-spacing:0.18px">eg</i><i style="letter-spacing:0.33px">i</i><i style="letter-spacing:0.16px">s</i><i style="letter-spacing:0.45px">tr</i><i style="letter-spacing:0.16px">y</i></span></div>
<div class="r" style="top:525px"><span style="left:16px"><i style="letter-spacing:-0.28px">S</i><i style="letter-spacing:0.33px">i</i><i style="letter-spacing:0.18px">gna</i><i style="letter-spacing:0.41px">t</i><i style="letter-spacing:0.18px">u</i><i style="letter-spacing:0.50px">r</i><i style="letter-spacing:0.18px">e</i></span></div>
<div class="r" style="top:540px"><span style="left:16px"><i style="letter-spacing:-0.26px">T</i><i style="letter-spacing:0.17px">ex</i><i style="letter-spacing:0.41px">t</i><i style="letter-spacing:-0.28px">S</i><i style="letter-spacing:0.41px">t</i><i style="letter-spacing:0.16px">y</i><i style="letter-spacing:0.33px">l</i><i style="letter-spacing:0.18px">e</i></span></div>
<div class="r" style="top:555px"><span style="left:16px"><i style="letter-spacing:-0.31px">U</i><i style="letter-spacing:0.36px">I</i><i style="letter-spacing:-0.26px">T</i><i style="letter-spacing:0.17px">ex</i><i style="letter-spacing:0.41px">t</i></span></div>
<div class="r" style="top:570px"><span style="left:16px"><i style="letter-spacing:-0.31px">U</i><i style="letter-spacing:0.18px">pg</i><i style="letter-spacing:0.50px">r</i><i style="letter-spacing:0.18px">ade</i></span></div>
<div class="r" style="top:585px"><span style="left:16px"><i style="letter-spacing:-1.36px;position:relative;top:-2px">_</i><i style="letter-spacing:-0.28px">V</i><i style="letter-spacing:0.18px">a</i><i style="letter-spacing:0.33px">li</i><i style="letter-spacing:0.18px">da</i><i style="letter-spacing:0.37px">ti</i><i style="letter-spacing:0.18px">on</i></span></div>
<div class="r" style="top:600px"><span style="left:16px"><i style="letter-spacing:-1.36px;position:relative;top:-2px">_</i><i style="letter-spacing:0.17px">sq</i><i style="letter-spacing:0.33px">l</i><i style="letter-spacing:-0.28px">A</i><i style="letter-spacing:0.16px">c</i><i style="letter-spacing:0.37px">ti</i><i style="letter-spacing:0.18px">on</i></span></div>
<div class="r" style="top:615px"><span style="left:16px"><i style="letter-spacing:-1.36px;position:relative;top:-2px">_</i><i style="letter-spacing:0.17px">sq</i><i style="letter-spacing:0.33px">l</i><i style="letter-spacing:-0.26px">F</i><i style="letter-spacing:0.18px">o</i><i style="letter-spacing:0.33px">ll</i><i style="letter-spacing:0.21px">ow</i><i style="letter-spacing:-0.31px">C</i><i style="letter-spacing:0.19px">omponen</i><i style="letter-spacing:0.41px">t</i><i style="letter-spacing:0.16px">s</i></span></div>
</div></div>
<div id="rp" class="a pane"><div class="pin">
  <div class="hd"><b style="left:6px;letter-spacing:-0.4px">Action</b><b style="left:534px;letter-spacing:-0.12px">Condition</b></div>
  <div class="hdv" style="left:527px"></div>
<div class="r" style="top:15px"><span class="c1"><i style="letter-spacing:-0.31px">RMCCPS</i><i style="letter-spacing:0.18px">ea</i><i style="letter-spacing:0.50px">r</i><i style="letter-spacing:0.17px">ch</i></span><span class="c2"><i style="letter-spacing:-0.30px">NOT</i><i style="letter-spacing:-0.19px"> </i><i style="letter-spacing:0.36px">I</i><i style="letter-spacing:0.17px">ns</i><i style="letter-spacing:0.41px">t</i><i style="letter-spacing:0.18px">a</i><i style="letter-spacing:0.33px">ll</i><i style="letter-spacing:0.18px">ed</i></span></div>
<div class="r" style="top:30px"><span class="c1"><i style="letter-spacing:-0.28px">S</i><i style="letter-spacing:0.18px">e</i><i style="letter-spacing:0.37px">lf</i><i style="letter-spacing:-0.31px">R</i><i style="letter-spacing:0.18px">eg</i><i style="letter-spacing:-0.35px">M</i><i style="letter-spacing:0.18px">odu</i><i style="letter-spacing:0.33px">l</i><i style="letter-spacing:0.17px">es</i></span><span class="c2"></span></div>
<div class="r" style="top:45px"><span class="c1"><i style="letter-spacing:-0.28px">S</i><i style="letter-spacing:0.18px">e</i><i style="letter-spacing:0.37px">lf</i><i style="letter-spacing:-0.31px">U</i><i style="letter-spacing:0.18px">n</i><i style="letter-spacing:0.50px">r</i><i style="letter-spacing:0.18px">eg</i><i style="letter-spacing:-0.35px">M</i><i style="letter-spacing:0.18px">odu</i><i style="letter-spacing:0.33px">l</i><i style="letter-spacing:0.17px">es</i></span><span class="c2"></span></div>
<div class="r" style="top:60px"><span class="c1"><i style="letter-spacing:-0.28px">S</i><i style="letter-spacing:0.18px">e</i><i style="letter-spacing:0.41px">t</i><i style="letter-spacing:-0.30px">ODBCF</i><i style="letter-spacing:0.18px">o</i><i style="letter-spacing:0.33px">l</i><i style="letter-spacing:0.18px">de</i><i style="letter-spacing:0.50px">r</i><i style="letter-spacing:0.16px">s</i></span><span class="c2"></span></div>
<div class="r" style="top:75px"><span class="c1"><i style="letter-spacing:-0.28px">S</i><i style="letter-spacing:0.41px">t</i><i style="letter-spacing:0.18px">a</i><i style="letter-spacing:0.45px">rt</i><i style="letter-spacing:-0.28px">S</i><i style="letter-spacing:0.18px">e</i><i style="letter-spacing:0.50px">r</i><i style="letter-spacing:0.16px">v</i><i style="letter-spacing:0.33px">i</i><i style="letter-spacing:0.17px">ces</i></span><span class="c2"><i style="letter-spacing:-0.28px">V</i><i style="letter-spacing:0.18px">e</i><i style="letter-spacing:0.50px">r</i><i style="letter-spacing:0.16px">s</i><i style="letter-spacing:0.33px">i</i><i style="letter-spacing:0.18px">on</i><i style="letter-spacing:-0.28px">NT</i></span></div>
<div class="r" style="top:90px"><span class="c1"><i style="letter-spacing:-0.28px">S</i><i style="letter-spacing:0.41px">t</i><i style="letter-spacing:0.18px">op</i><i style="letter-spacing:-0.28px">S</i><i style="letter-spacing:0.18px">e</i><i style="letter-spacing:0.50px">r</i><i style="letter-spacing:0.16px">v</i><i style="letter-spacing:0.33px">i</i><i style="letter-spacing:0.17px">ces</i></span><span class="c2"><i style="letter-spacing:-0.28px">V</i><i style="letter-spacing:0.18px">e</i><i style="letter-spacing:0.50px">r</i><i style="letter-spacing:0.16px">s</i><i style="letter-spacing:0.33px">i</i><i style="letter-spacing:0.18px">on</i><i style="letter-spacing:-0.28px">NT</i></span></div>
<div class="r" style="top:105px"><span class="c1"><i style="letter-spacing:-0.31px">U</i><i style="letter-spacing:0.18px">npub</i><i style="letter-spacing:0.33px">li</i><i style="letter-spacing:0.17px">sh</i><i style="letter-spacing:-0.31px">C</i><i style="letter-spacing:0.19px">omponen</i><i style="letter-spacing:0.41px">t</i><i style="letter-spacing:0.16px">s</i></span><span class="c2"></span></div>
<div class="r" style="top:120px"><span class="c1"><i style="letter-spacing:-0.31px">U</i><i style="letter-spacing:0.18px">npub</i><i style="letter-spacing:0.33px">li</i><i style="letter-spacing:0.17px">sh</i><i style="letter-spacing:-0.26px">F</i><i style="letter-spacing:0.18px">ea</i><i style="letter-spacing:0.41px">t</i><i style="letter-spacing:0.18px">u</i><i style="letter-spacing:0.50px">r</i><i style="letter-spacing:0.17px">es</i></span><span class="c2"></span></div>
<div class="r" style="top:135px"><span class="c1"><i style="letter-spacing:-0.31px">U</i><i style="letter-spacing:0.18px">n</i><i style="letter-spacing:0.50px">r</i><i style="letter-spacing:0.18px">eg</i><i style="letter-spacing:0.33px">i</i><i style="letter-spacing:0.16px">s</i><i style="letter-spacing:0.41px">t</i><i style="letter-spacing:0.18px">e</i><i style="letter-spacing:0.50px">r</i><i style="letter-spacing:-0.31px">C</i><i style="letter-spacing:0.33px">l</i><i style="letter-spacing:0.17px">ass</i><i style="letter-spacing:0.36px">I</i><i style="letter-spacing:0.18px">n</i><i style="letter-spacing:0.41px">f</i><i style="letter-spacing:0.18px">o</i></span><span class="c2"></span></div>
<div class="r" style="top:150px"><span class="c1"><i style="letter-spacing:-0.31px">U</i><i style="letter-spacing:0.18px">n</i><i style="letter-spacing:0.50px">r</i><i style="letter-spacing:0.18px">eg</i><i style="letter-spacing:0.33px">i</i><i style="letter-spacing:0.16px">s</i><i style="letter-spacing:0.41px">t</i><i style="letter-spacing:0.18px">e</i><i style="letter-spacing:0.50px">r</i><i style="letter-spacing:-0.31px">C</i><i style="letter-spacing:0.23px">om</i><i style="letter-spacing:-0.28px">P</i><i style="letter-spacing:0.33px">l</i><i style="letter-spacing:0.17px">us</i></span><span class="c2"></span></div>
<div class="r" style="top:165px"><span class="c1"><i style="letter-spacing:-0.31px">U</i><i style="letter-spacing:0.18px">n</i><i style="letter-spacing:0.50px">r</i><i style="letter-spacing:0.18px">eg</i><i style="letter-spacing:0.33px">i</i><i style="letter-spacing:0.16px">s</i><i style="letter-spacing:0.41px">t</i><i style="letter-spacing:0.18px">e</i><i style="letter-spacing:0.50px">r</i><i style="letter-spacing:-0.28px">E</i><i style="letter-spacing:0.16px">x</i><i style="letter-spacing:0.41px">t</i><i style="letter-spacing:0.17px">ens</i><i style="letter-spacing:0.33px">i</i><i style="letter-spacing:0.18px">on</i><i style="letter-spacing:0.36px">I</i><i style="letter-spacing:0.18px">n</i><i style="letter-spacing:0.41px">f</i><i style="letter-spacing:0.18px">o</i></span><span class="c2"></span></div>
<div class="r" style="top:180px"><span class="c1"><i style="letter-spacing:-0.31px">U</i><i style="letter-spacing:0.18px">n</i><i style="letter-spacing:0.50px">r</i><i style="letter-spacing:0.18px">eg</i><i style="letter-spacing:0.33px">i</i><i style="letter-spacing:0.16px">s</i><i style="letter-spacing:0.41px">t</i><i style="letter-spacing:0.18px">e</i><i style="letter-spacing:0.50px">r</i><i style="letter-spacing:-0.26px">F</i><i style="letter-spacing:0.18px">on</i><i style="letter-spacing:0.41px">t</i><i style="letter-spacing:0.16px">s</i></span><span class="c2"></span></div>
<div class="r" style="top:195px"><span class="c1"><i style="letter-spacing:-0.31px">U</i><i style="letter-spacing:0.18px">n</i><i style="letter-spacing:0.50px">r</i><i style="letter-spacing:0.18px">eg</i><i style="letter-spacing:0.33px">i</i><i style="letter-spacing:0.16px">s</i><i style="letter-spacing:0.41px">t</i><i style="letter-spacing:0.18px">e</i><i style="letter-spacing:0.50px">r</i><i style="letter-spacing:-0.35px">M</i><i style="letter-spacing:0.36px">I</i><i style="letter-spacing:-0.32px">ME</i><i style="letter-spacing:0.36px">I</i><i style="letter-spacing:0.18px">n</i><i style="letter-spacing:0.41px">f</i><i style="letter-spacing:0.18px">o</i></span><span class="c2"></span></div>
<div class="r" style="top:210px"><span class="c1"><i style="letter-spacing:-0.31px">U</i><i style="letter-spacing:0.18px">n</i><i style="letter-spacing:0.50px">r</i><i style="letter-spacing:0.18px">eg</i><i style="letter-spacing:0.33px">i</i><i style="letter-spacing:0.16px">s</i><i style="letter-spacing:0.41px">t</i><i style="letter-spacing:0.18px">e</i><i style="letter-spacing:0.50px">r</i><i style="letter-spacing:-0.28px">P</i><i style="letter-spacing:0.50px">r</i><i style="letter-spacing:0.18px">og</i><i style="letter-spacing:0.36px">I</i><i style="letter-spacing:0.18px">d</i><i style="letter-spacing:0.36px">I</i><i style="letter-spacing:0.18px">n</i><i style="letter-spacing:0.41px">f</i><i style="letter-spacing:0.18px">o</i></span><span class="c2"></span></div>
<div class="r" style="top:225px"><span class="c1"><i style="letter-spacing:-0.31px">U</i><i style="letter-spacing:0.18px">n</i><i style="letter-spacing:0.50px">r</i><i style="letter-spacing:0.18px">eg</i><i style="letter-spacing:0.33px">i</i><i style="letter-spacing:0.16px">s</i><i style="letter-spacing:0.41px">t</i><i style="letter-spacing:0.18px">e</i><i style="letter-spacing:0.50px">r</i><i style="letter-spacing:-0.26px">T</i><i style="letter-spacing:0.17px">ype</i><i style="letter-spacing:-0.24px">L</i><i style="letter-spacing:0.33px">i</i><i style="letter-spacing:0.18px">b</i><i style="letter-spacing:0.50px">r</i><i style="letter-spacing:0.18px">a</i><i style="letter-spacing:0.41px">ri</i><i style="letter-spacing:0.17px">es</i></span><span class="c2"></span></div>
<div class="r" style="top:240px"><span class="c1"><i style="letter-spacing:-0.40px">W</i><i style="letter-spacing:0.41px">rit</i><i style="letter-spacing:0.18px">e</i><i style="letter-spacing:-0.28px">E</i><i style="letter-spacing:0.17px">nv</i><i style="letter-spacing:0.41px">ir</i><i style="letter-spacing:0.20px">onmen</i><i style="letter-spacing:0.41px">t</i><i style="letter-spacing:-0.28px">S</i><i style="letter-spacing:0.41px">tri</i><i style="letter-spacing:0.17px">ngs</i></span><span class="c2"></span></div>
<div class="r" style="top:255px"><span class="c1"><i style="letter-spacing:-0.40px">W</i><i style="letter-spacing:0.41px">rit</i><i style="letter-spacing:0.18px">e</i><i style="letter-spacing:0.36px">I</i><i style="letter-spacing:0.18px">n</i><i style="letter-spacing:0.33px">i</i><i style="letter-spacing:-0.28px">V</i><i style="letter-spacing:0.18px">a</i><i style="letter-spacing:0.33px">l</i><i style="letter-spacing:0.17px">ues</i></span><span class="c2"></span></div>
<div class="r" style="top:270px"><span class="c1"><i style="letter-spacing:-0.40px">W</i><i style="letter-spacing:0.41px">rit</i><i style="letter-spacing:0.18px">e</i><i style="letter-spacing:-0.31px">R</i><i style="letter-spacing:0.18px">eg</i><i style="letter-spacing:0.33px">i</i><i style="letter-spacing:0.16px">s</i><i style="letter-spacing:0.45px">tr</i><i style="letter-spacing:0.16px">y</i><i style="letter-spacing:-0.28px">V</i><i style="letter-spacing:0.18px">a</i><i style="letter-spacing:0.33px">l</i><i style="letter-spacing:0.17px">ues</i></span><span class="c2"></span></div>
<div class="r" style="top:285px"><span class="c1"><i style="letter-spacing:-0.35px">M</i><i style="letter-spacing:0.16px">s</i><i style="letter-spacing:0.33px">i</i><i style="letter-spacing:-0.28px">P</i><i style="letter-spacing:0.18px">ub</i><i style="letter-spacing:0.33px">li</i><i style="letter-spacing:0.17px">sh</i><i style="letter-spacing:-0.28px">A</i><i style="letter-spacing:0.19px">ssemb</i><i style="letter-spacing:0.33px">li</i><i style="letter-spacing:0.17px">es</i></span><span class="c2"></span></div>
<div class="r" style="top:300px"><span class="c1"><i style="letter-spacing:-0.35px">M</i><i style="letter-spacing:0.16px">s</i><i style="letter-spacing:0.33px">i</i><i style="letter-spacing:-0.31px">U</i><i style="letter-spacing:0.18px">npub</i><i style="letter-spacing:0.33px">li</i><i style="letter-spacing:0.17px">sh</i><i style="letter-spacing:-0.28px">A</i><i style="letter-spacing:0.19px">ssemb</i><i style="letter-spacing:0.33px">li</i><i style="letter-spacing:0.17px">es</i></span><span class="c2"></span></div>
<div class="r" style="top:315px"><span class="c1"><i style="letter-spacing:0.36px">I</i><i style="letter-spacing:0.17px">ns</i><i style="letter-spacing:0.41px">t</i><i style="letter-spacing:0.18px">a</i><i style="letter-spacing:0.33px">ll</i><i style="letter-spacing:0.36px">I</i><i style="letter-spacing:0.18px">n</i><i style="letter-spacing:0.36px">iti</i><i style="letter-spacing:0.18px">a</i><i style="letter-spacing:0.33px">li</i><i style="letter-spacing:0.17px">ze</i></span><span class="c2"></span></div>
<div class="r" style="top:330px"><span class="c1"><i style="letter-spacing:0.36px">I</i><i style="letter-spacing:0.17px">ns</i><i style="letter-spacing:0.41px">t</i><i style="letter-spacing:0.18px">a</i><i style="letter-spacing:0.33px">ll</i><i style="letter-spacing:-0.26px">F</i><i style="letter-spacing:0.33px">i</i><i style="letter-spacing:0.18px">na</i><i style="letter-spacing:0.33px">li</i><i style="letter-spacing:0.17px">ze</i></span><span class="c2"></span></div>
<div class="r" style="top:345px"><span class="c1"><i style="letter-spacing:-0.30px">SNAC</i><i style="letter-spacing:-1.36px;position:relative;top:-2px">_</i><i style="letter-spacing:0.36px">I</i><i style="letter-spacing:-0.28px">A</i><i style="letter-spacing:0.17px">ccep</i><i style="letter-spacing:0.41px">t</i><i style="letter-spacing:-0.28px">SQLNCL</i><i style="letter-spacing:0.36px">I</i><i style="letter-spacing:-0.24px">L</i><i style="letter-spacing:0.33px">i</i><i style="letter-spacing:0.17px">cense</i><i style="letter-spacing:-0.26px">T</i><i style="letter-spacing:0.18px">e</i><i style="letter-spacing:0.50px">r</i><i style="letter-spacing:0.22px">ms</i></span><span class="c2"><i style="letter-spacing:0.36px">(</i><i style="letter-spacing:-0.30px">NOT</i><i style="letter-spacing:-0.19px"> </i><i style="letter-spacing:0.36px">I</i><i style="letter-spacing:0.17px">ns</i><i style="letter-spacing:0.41px">t</i><i style="letter-spacing:0.18px">a</i><i style="letter-spacing:0.33px">ll</i><i style="letter-spacing:0.18px">ed</i><i style="letter-spacing:0.36px">)</i><i style="letter-spacing:-0.19px"> </i><i style="letter-spacing:-0.30px">AND</i><i style="letter-spacing:-0.19px"> </i><i style="letter-spacing:0.36px">(</i><i style="letter-spacing:-0.31px">U</i><i style="letter-spacing:0.36px">I</i><i style="letter-spacing:-0.24px">L</i><i style="letter-spacing:0.17px">eve</i><i style="letter-spacing:0.33px">l</i><i style="letter-spacing:-0.19px"> </i><i style="letter-spacing:0.64px">&lt;&gt;</i><i style="letter-spacing:-0.19px"> </i><i style="letter-spacing:-0.13px">5</i><i style="letter-spacing:0.36px">)</i><i style="letter-spacing:-0.19px"> </i><i style="letter-spacing:-0.30px">AND</i><i style="letter-spacing:-0.19px"> </i><i style="letter-spacing:0.36px">(</i><i style="letter-spacing:-0.30px">NOT</i><i style="letter-spacing:-0.19px"> </i><i style="letter-spacing:0.36px">I</i><i style="letter-spacing:-0.29px">ACCEPTSQLNCL</i><i style="letter-spacing:0.36px">I</i><i style="letter-spacing:-0.24px">L</i><i style="letter-spacing:0.36px">I</i><i style="letter-spacing:-0.30px">CENSETERMS</i><i style="letter-spacing:0.51px">="</i><i style="letter-spacing:-0.28px">YES</i><i style="letter-spacing:0.37px">")</i></span></div>
<div class="r" style="top:360px"><span class="c1"><i style="letter-spacing:-0.30px">SNAC</i><i style="letter-spacing:-1.36px;position:relative;top:-2px">_</i><i style="letter-spacing:-0.28px">S</i><i style="letter-spacing:0.18px">e</i><i style="letter-spacing:0.41px">t</i><i style="letter-spacing:-0.31px">C</i><i style="letter-spacing:0.33px">li</i><i style="letter-spacing:0.18px">en</i><i style="letter-spacing:0.41px">t</i><i style="letter-spacing:-0.28px">SSNLD</i><i style="letter-spacing:0.18px">e</i><i style="letter-spacing:0.41px">f</i><i style="letter-spacing:0.18px">au</i><i style="letter-spacing:0.37px">lt</i><i style="letter-spacing:0.16px">s</i><i style="letter-spacing:-1.36px;position:relative;top:-2px">_</i><i style="letter-spacing:-0.13px">32</i></span><span class="c2"><i style="letter-spacing:0.48px">($</i><i style="letter-spacing:-0.30px">DP</i><i style="letter-spacing:-1.36px;position:relative;top:-2px">_</i><i style="letter-spacing:0.17px">sq</i><i style="letter-spacing:0.33px">l</i><i style="letter-spacing:0.17px">nc</i><i style="letter-spacing:0.33px">li</i><i style="letter-spacing:-0.13px">11</i><i style="letter-spacing:-1.36px;position:relative;top:-2px">_</i><i style="letter-spacing:0.18px">d</i><i style="letter-spacing:0.33px">ll</i><i style="letter-spacing:-1.36px;position:relative;top:-2px">_</i><i style="letter-spacing:-0.13px">32</i><i style="letter-spacing:-0.19px"> </i><i style="letter-spacing:0.64px">=</i><i style="letter-spacing:-0.19px"> </i><i style="letter-spacing:-0.13px">3</i><i style="letter-spacing:0.36px">)</i></span></div>
<div class="r sel" style="top:375px"><span class="c1"><i style="letter-spacing:-0.30px">SNAC</i><i style="letter-spacing:-1.36px;position:relative;top:-2px">_</i><i style="letter-spacing:-0.28px">S</i><i style="letter-spacing:0.18px">e</i><i style="letter-spacing:0.41px">t</i><i style="letter-spacing:-0.31px">C</i><i style="letter-spacing:0.33px">li</i><i style="letter-spacing:0.18px">en</i><i style="letter-spacing:0.41px">t</i><i style="letter-spacing:-0.28px">SSNLD</i><i style="letter-spacing:0.18px">e</i><i style="letter-spacing:0.41px">f</i><i style="letter-spacing:0.18px">au</i><i style="letter-spacing:0.37px">lt</i><i style="letter-spacing:0.16px">s</i><i style="letter-spacing:-1.36px;position:relative;top:-2px">_</i><i style="letter-spacing:-0.13px">64</i></span><span class="c2"><i style="letter-spacing:0.48px">($</i><i style="letter-spacing:-0.30px">DP</i><i style="letter-spacing:-1.36px;position:relative;top:-2px">_</i><i style="letter-spacing:0.17px">sq</i><i style="letter-spacing:0.33px">l</i><i style="letter-spacing:0.17px">nc</i><i style="letter-spacing:0.33px">li</i><i style="letter-spacing:-0.13px">11</i><i style="letter-spacing:-1.36px;position:relative;top:-2px">_</i><i style="letter-spacing:0.18px">d</i><i style="letter-spacing:0.33px">ll</i><i style="letter-spacing:-1.36px;position:relative;top:-2px">_</i><i style="letter-spacing:-0.13px">64</i><i style="letter-spacing:-0.19px"> </i><i style="letter-spacing:0.64px">=</i><i style="letter-spacing:-0.19px"> </i><i style="letter-spacing:-0.13px">3</i><i style="letter-spacing:0.36px">)</i></span></div>
<div class="r" style="top:390px"><span class="c1"><i style="letter-spacing:-0.30px">CA</i><i style="letter-spacing:-1.36px;position:relative;top:-2px">_</i><i style="letter-spacing:-0.28px">E</i><i style="letter-spacing:0.50px">rr</i><i style="letter-spacing:0.18px">o</i><i style="letter-spacing:0.50px">r</i><i style="letter-spacing:-0.31px">D</i><i style="letter-spacing:0.39px">iff</i><i style="letter-spacing:0.18px">e</i><i style="letter-spacing:0.50px">r</i><i style="letter-spacing:0.18px">en</i><i style="letter-spacing:0.41px">t</i><i style="letter-spacing:-0.24px">L</i><i style="letter-spacing:0.18px">ang</i></span><span class="c2"><i style="letter-spacing:0.36px">(</i><i style="letter-spacing:-0.31px">D</i><i style="letter-spacing:0.36px">I</i><i style="letter-spacing:-0.29px">FFERENTLANGFOUND</i><i style="letter-spacing:-1.36px;position:relative;top:-2px">_</i><i style="letter-spacing:-0.13px">64</i><i style="letter-spacing:-0.19px"> </i><i style="letter-spacing:-0.30px">AND</i><i style="letter-spacing:-0.19px"> </i><i style="letter-spacing:-0.28px">E</i><i style="letter-spacing:0.18px">nab</i><i style="letter-spacing:0.33px">l</i><i style="letter-spacing:0.18px">e</i><i style="letter-spacing:-0.28px">S</i><i style="letter-spacing:0.16px">x</i><i style="letter-spacing:-0.26px">SL</i><i style="letter-spacing:0.18px">ang</i><i style="letter-spacing:0.64px">=</i><i style="letter-spacing:-0.13px">0</i><i style="letter-spacing:0.36px">)</i></span></div>
<div class="r" style="top:405px"><span class="c1"><i style="letter-spacing:-0.28px">S</i><i style="letter-spacing:0.16px">k</i><i style="letter-spacing:0.33px">i</i><i style="letter-spacing:0.18px">p</i><i style="letter-spacing:0.36px">I</i><i style="letter-spacing:0.17px">ns</i><i style="letter-spacing:0.41px">t</i><i style="letter-spacing:0.18px">a</i><i style="letter-spacing:0.33px">ll</i><i style="letter-spacing:-0.30px">CA</i></span><span class="c2"><i style="letter-spacing:-0.31px">NEWERFOUND</i><i style="letter-spacing:-1.36px;position:relative;top:-2px">_</i><i style="letter-spacing:-0.13px">64</i></span></div>
<div class="r" style="top:420px"><span class="c1"><i style="letter-spacing:-0.30px">CA</i><i style="letter-spacing:-1.36px;position:relative;top:-2px">_</i><i style="letter-spacing:-0.28px">S</i><i style="letter-spacing:0.18px">e</i><i style="letter-spacing:0.41px">t</i><i style="letter-spacing:-0.31px">R</i><i style="letter-spacing:0.18px">e</i><i style="letter-spacing:0.41px">f</i><i style="letter-spacing:-0.31px">C</i><i style="letter-spacing:0.18px">oun</i><i style="letter-spacing:0.41px">t</i><i style="letter-spacing:-0.31px">U</i><i style="letter-spacing:0.18px">pg</i><i style="letter-spacing:0.50px">r</i><i style="letter-spacing:0.18px">ade</i><i style="letter-spacing:-0.26px">F</i><i style="letter-spacing:0.33px">l</i><i style="letter-spacing:0.18px">ag</i></span><span class="c2"><i style="letter-spacing:-0.30px">OLDERFOUND</i><i style="letter-spacing:-1.36px;position:relative;top:-2px">_</i><i style="letter-spacing:-0.13px">64</i><i style="letter-spacing:-0.19px"> </i><i style="letter-spacing:-0.32px">OR</i><i style="letter-spacing:-0.19px"> </i><i style="letter-spacing:-0.30px">OLDERFOUND</i><i style="letter-spacing:-0.13px">2</i><i style="letter-spacing:-1.36px;position:relative;top:-2px">_</i><i style="letter-spacing:-0.13px">64</i></span></div>
<div class="r" style="top:435px"><span class="c1"><i style="letter-spacing:-0.30px">CA</i><i style="letter-spacing:-1.36px;position:relative;top:-2px">_</i><i style="letter-spacing:-0.28px">S</i><i style="letter-spacing:0.18px">e</i><i style="letter-spacing:0.41px">t</i><i style="letter-spacing:-0.31px">R</i><i style="letter-spacing:0.18px">e</i><i style="letter-spacing:0.41px">f</i><i style="letter-spacing:-0.31px">C</i><i style="letter-spacing:0.18px">oun</i><i style="letter-spacing:0.41px">t</i><i style="letter-spacing:-0.31px">N</i><i style="letter-spacing:0.20px">ewe</i><i style="letter-spacing:0.50px">r</i><i style="letter-spacing:-0.26px">F</i><i style="letter-spacing:0.18px">ound</i><i style="letter-spacing:-0.26px">F</i><i style="letter-spacing:0.33px">l</i><i style="letter-spacing:0.18px">ag</i></span><span class="c2"><i style="letter-spacing:-0.31px">NEWERFOUND</i><i style="letter-spacing:-1.36px;position:relative;top:-2px">_</i><i style="letter-spacing:-0.13px">64</i></span></div>
<div class="r" style="top:450px"><span class="c1"><i style="letter-spacing:0.36px">I</i><i style="letter-spacing:0.16px">s</i><i style="letter-spacing:-0.28px">P</i><i style="letter-spacing:0.18px">end</i><i style="letter-spacing:0.33px">i</i><i style="letter-spacing:0.18px">ng</i><i style="letter-spacing:-0.31px">R</i><i style="letter-spacing:0.18px">eboo</i><i style="letter-spacing:0.41px">t</i><i style="letter-spacing:-0.28px">K</i><i style="letter-spacing:0.17px">ey</i></span><span class="c2"><i style="letter-spacing:-0.13px">1</i></span></div>
<div class="r" style="top:465px"><span class="c1"><i style="letter-spacing:-0.30px">CA</i><i style="letter-spacing:-1.36px;position:relative;top:-2px">_</i><i style="letter-spacing:-0.28px">E</i><i style="letter-spacing:0.50px">rr</i><i style="letter-spacing:0.18px">o</i><i style="letter-spacing:0.50px">r</i><i style="letter-spacing:-0.28px">P</i><i style="letter-spacing:0.18px">end</i><i style="letter-spacing:0.33px">i</i><i style="letter-spacing:0.18px">ng</i><i style="letter-spacing:-0.31px">R</i><i style="letter-spacing:0.18px">eboo</i><i style="letter-spacing:0.41px">t</i></span><span class="c2"><i style="letter-spacing:-0.30px">NOT</i><i style="letter-spacing:-0.19px"> </i><i style="letter-spacing:0.36px">I</i><i style="letter-spacing:0.17px">ns</i><i style="letter-spacing:0.41px">t</i><i style="letter-spacing:0.18px">a</i><i style="letter-spacing:0.33px">ll</i><i style="letter-spacing:0.18px">ed</i><i style="letter-spacing:-0.19px"> </i><i style="letter-spacing:-0.30px">AND</i><i style="letter-spacing:-0.19px"> </i><i style="letter-spacing:-0.30px">PEND</i><i style="letter-spacing:0.36px">I</i><i style="letter-spacing:-0.30px">NGF</i><i style="letter-spacing:0.36px">I</i><i style="letter-spacing:-0.29px">LERENAME</i><i style="letter-spacing:-0.19px"> </i><i style="letter-spacing:-0.30px">AND</i><i style="letter-spacing:-0.19px"> </i><i style="letter-spacing:-0.30px">REBOOT</i></span></div>
<div class="r" style="top:480px"><span class="c1"><i style="letter-spacing:-0.28px">S</i><i style="letter-spacing:0.18px">q</i><i style="letter-spacing:0.33px">l</i><i style="letter-spacing:0.22px">ms</i><i style="letter-spacing:0.41px">ir</i><i style="letter-spacing:0.16px">c</i><i style="letter-spacing:-1.36px;position:relative;top:-2px">_</i><i style="letter-spacing:-0.28px">V</i><i style="letter-spacing:0.18px">a</i><i style="letter-spacing:0.33px">li</i><i style="letter-spacing:0.18px">da</i><i style="letter-spacing:0.41px">t</i><i style="letter-spacing:0.18px">e</i><i style="letter-spacing:-0.28px">A</i><i style="letter-spacing:0.18px">pp</i><i style="letter-spacing:-0.33px">G</i><i style="letter-spacing:0.18px">u</i><i style="letter-spacing:0.33px">i</i><i style="letter-spacing:0.18px">d</i><i style="letter-spacing:-1.36px;position:relative;top:-2px">_</i><i style="letter-spacing:-0.13px">64</i></span><span class="c2"><i style="letter-spacing:-0.30px">APPGU</i><i style="letter-spacing:0.36px">I</i><i style="letter-spacing:-0.31px">D</i><i style="letter-spacing:-0.19px"> </i><i style="letter-spacing:-0.30px">AND</i><i style="letter-spacing:-0.19px"> </i><i style="letter-spacing:0.36px">(</i><i style="letter-spacing:-0.30px">NOT</i><i style="letter-spacing:-0.19px"> </i><i style="letter-spacing:0.36px">(</i><i style="letter-spacing:-0.31px">REMOVE</i><i style="letter-spacing:0.51px">="</i><i style="letter-spacing:-0.25px">ALL</i><i style="letter-spacing:0.37px">"))</i></span></div>
<div class="r" style="top:495px"><span class="c1"><i style="letter-spacing:-0.28px">S</i><i style="letter-spacing:0.18px">q</i><i style="letter-spacing:0.33px">l</i><i style="letter-spacing:0.22px">ms</i><i style="letter-spacing:0.41px">ir</i><i style="letter-spacing:0.16px">c</i><i style="letter-spacing:-1.36px;position:relative;top:-2px">_</i><i style="letter-spacing:-0.31px">R</i><i style="letter-spacing:0.18px">e</i><i style="letter-spacing:0.41px">f</i><i style="letter-spacing:-0.31px">C</i><i style="letter-spacing:0.18px">oun</i><i style="letter-spacing:0.41px">t</i><i style="letter-spacing:-0.28px">A</i><i style="letter-spacing:0.18px">pp</i><i style="letter-spacing:-0.33px">G</i><i style="letter-spacing:0.18px">u</i><i style="letter-spacing:0.33px">i</i><i style="letter-spacing:0.18px">d</i><i style="letter-spacing:-1.36px;position:relative;top:-2px">_</i><i style="letter-spacing:-0.13px">64</i></span><span class="c2"><i style="letter-spacing:0.36px">(</i><i style="letter-spacing:-0.30px">RE</i><i style="letter-spacing:0.36px">I</i><i style="letter-spacing:-0.27px">NSTALL</i><i style="letter-spacing:-0.19px"> </i><i style="letter-spacing:-0.32px">OR</i><i style="letter-spacing:-0.19px"> </i><i style="letter-spacing:-0.30px">RE</i><i style="letter-spacing:0.36px">I</i><i style="letter-spacing:-0.29px">NSTALLMODE</i><i style="letter-spacing:0.36px">)</i><i style="letter-spacing:-0.19px"> </i><i style="letter-spacing:-0.30px">AND</i><i style="letter-spacing:-0.19px"> </i><i style="letter-spacing:-0.30px">APPGU</i><i style="letter-spacing:0.36px">I</i><i style="letter-spacing:-0.31px">D</i></span></div>
<div class="r" style="top:510px"><span class="c1"><i style="letter-spacing:-0.28px">S</i><i style="letter-spacing:0.18px">q</i><i style="letter-spacing:0.33px">l</i><i style="letter-spacing:0.22px">ms</i><i style="letter-spacing:0.41px">ir</i><i style="letter-spacing:0.16px">c</i><i style="letter-spacing:-1.36px;position:relative;top:-2px">_</i><i style="letter-spacing:-0.28px">B</i><i style="letter-spacing:0.17px">ackup</i><i style="letter-spacing:-0.28px">A</i><i style="letter-spacing:0.18px">pp</i><i style="letter-spacing:-0.33px">G</i><i style="letter-spacing:0.18px">u</i><i style="letter-spacing:0.33px">i</i><i style="letter-spacing:0.18px">d</i><i style="letter-spacing:-1.36px;position:relative;top:-2px">_</i><i style="letter-spacing:-0.13px">64</i></span><span class="c2"><i style="letter-spacing:-0.30px">RE</i><i style="letter-spacing:0.36px">I</i><i style="letter-spacing:-0.27px">NSTALL</i><i style="letter-spacing:-0.19px"> </i><i style="letter-spacing:-0.32px">OR</i><i style="letter-spacing:-0.19px"> </i><i style="letter-spacing:-0.30px">RE</i><i style="letter-spacing:0.36px">I</i><i style="letter-spacing:-0.29px">NSTALLMODE</i><i style="letter-spacing:-0.19px"> </i><i style="letter-spacing:-0.32px">OR</i><i style="letter-spacing:-0.19px"> </i><i style="letter-spacing:-0.30px">UPGRADEPRODUCT</i></span></div>
<div class="r" style="top:525px"><span class="c1"><i style="letter-spacing:-0.28px">S</i><i style="letter-spacing:0.18px">q</i><i style="letter-spacing:0.33px">l</i><i style="letter-spacing:0.22px">ms</i><i style="letter-spacing:0.41px">ir</i><i style="letter-spacing:0.16px">c</i><i style="letter-spacing:-1.36px;position:relative;top:-2px">_</i><i style="letter-spacing:-0.31px">C</i><i style="letter-spacing:0.17px">heck</i><i style="letter-spacing:-0.28px">A</i><i style="letter-spacing:0.18px">pp</i><i style="letter-spacing:-0.31px">D</i><i style="letter-spacing:0.18px">ependency</i><i style="letter-spacing:-1.36px;position:relative;top:-2px">_</i><i style="letter-spacing:-0.13px">64</i></span><span class="c2"><i style="letter-spacing:-0.31px">REMOVE</i><i style="letter-spacing:-0.19px"> </i><i style="letter-spacing:-0.30px">AND</i><i style="letter-spacing:-0.19px"> </i><i style="letter-spacing:0.36px">(</i><i style="letter-spacing:-0.30px">NOT</i><i style="letter-spacing:-0.19px"> </i><i style="letter-spacing:-0.30px">UPGRAD</i><i style="letter-spacing:0.36px">I</i><i style="letter-spacing:-0.31px">NGPRODUCTCODE</i><i style="letter-spacing:0.36px">)</i></span></div>
<div class="r" style="top:540px"><span class="c1"><i style="letter-spacing:-0.28px">S</i><i style="letter-spacing:0.18px">q</i><i style="letter-spacing:0.33px">l</i><i style="letter-spacing:0.22px">ms</i><i style="letter-spacing:0.41px">ir</i><i style="letter-spacing:0.16px">c</i><i style="letter-spacing:-1.36px;position:relative;top:-2px">_</i><i style="letter-spacing:-0.31px">R</i><i style="letter-spacing:0.18px">eg</i><i style="letter-spacing:0.33px">i</i><i style="letter-spacing:0.16px">s</i><i style="letter-spacing:0.41px">t</i><i style="letter-spacing:0.18px">e</i><i style="letter-spacing:0.50px">r</i><i style="letter-spacing:-0.28px">A</i><i style="letter-spacing:0.18px">pp</i><i style="letter-spacing:-0.33px">G</i><i style="letter-spacing:0.18px">u</i><i style="letter-spacing:0.33px">i</i><i style="letter-spacing:0.18px">d</i><i style="letter-spacing:-1.36px;position:relative;top:-2px">_</i><i style="letter-spacing:-0.13px">64</i></span><span class="c2"><i style="letter-spacing:-0.30px">APPGU</i><i style="letter-spacing:0.36px">I</i><i style="letter-spacing:-0.31px">D</i><i style="letter-spacing:-0.19px"> </i><i style="letter-spacing:-0.30px">AND</i><i style="letter-spacing:-0.19px"> </i><i style="letter-spacing:0.36px">(</i><i style="letter-spacing:-0.30px">NOT</i><i style="letter-spacing:-0.19px"> </i><i style="letter-spacing:0.36px">(</i><i style="letter-spacing:-0.31px">REMOVE</i><i style="letter-spacing:0.51px">="</i><i style="letter-spacing:-0.25px">ALL</i><i style="letter-spacing:0.37px">"))</i></span></div>
<div class="r" style="top:555px"><span class="c1"><i style="letter-spacing:-0.28px">S</i><i style="letter-spacing:0.18px">q</i><i style="letter-spacing:0.33px">l</i><i style="letter-spacing:0.22px">ms</i><i style="letter-spacing:0.41px">ir</i><i style="letter-spacing:0.16px">c</i><i style="letter-spacing:-1.36px;position:relative;top:-2px">_</i><i style="letter-spacing:-0.31px">R</i><i style="letter-spacing:0.17px">es</i><i style="letter-spacing:0.41px">t</i><i style="letter-spacing:0.18px">o</i><i style="letter-spacing:0.50px">r</i><i style="letter-spacing:0.18px">e</i><i style="letter-spacing:-0.28px">A</i><i style="letter-spacing:0.18px">pp</i><i style="letter-spacing:-0.33px">G</i><i style="letter-spacing:0.18px">u</i><i style="letter-spacing:0.33px">i</i><i style="letter-spacing:0.18px">d</i><i style="letter-spacing:-1.36px;position:relative;top:-2px">_</i><i style="letter-spacing:-0.13px">64</i></span><span class="c2"><i style="letter-spacing:-0.30px">RE</i><i style="letter-spacing:0.36px">I</i><i style="letter-spacing:-0.27px">NSTALL</i><i style="letter-spacing:-0.19px"> </i><i style="letter-spacing:-0.32px">OR</i><i style="letter-spacing:-0.19px"> </i><i style="letter-spacing:-0.30px">RE</i><i style="letter-spacing:0.36px">I</i><i style="letter-spacing:-0.29px">NSTALLMODE</i><i style="letter-spacing:-0.19px"> </i><i style="letter-spacing:-0.32px">OR</i><i style="letter-spacing:-0.19px"> </i><i style="letter-spacing:-0.30px">UPGRADEPRODUCT</i></span></div>
<div class="r" style="top:570px"><span class="c1"><i style="letter-spacing:-0.28px">S</i><i style="letter-spacing:0.18px">q</i><i style="letter-spacing:0.33px">l</i><i style="letter-spacing:0.22px">ms</i><i style="letter-spacing:0.41px">ir</i><i style="letter-spacing:0.16px">c</i><i style="letter-spacing:-1.36px;position:relative;top:-2px">_</i><i style="letter-spacing:-0.31px">C</i><i style="letter-spacing:0.17px">heck</i><i style="letter-spacing:-0.24px">L</i><i style="letter-spacing:0.18px">anguage</i><i style="letter-spacing:-1.36px;position:relative;top:-2px">_</i><i style="letter-spacing:-0.13px">64</i></span><span class="c2"><i style="letter-spacing:0.36px">(</i><i style="letter-spacing:-0.30px">NOT</i><i style="letter-spacing:-0.19px"> </i><i style="letter-spacing:0.36px">I</i><i style="letter-spacing:0.17px">ns</i><i style="letter-spacing:0.41px">t</i><i style="letter-spacing:0.18px">a</i><i style="letter-spacing:0.33px">ll</i><i style="letter-spacing:0.18px">ed</i><i style="letter-spacing:0.36px">)</i><i style="letter-spacing:-0.19px"> </i><i style="letter-spacing:-0.30px">AND</i><i style="letter-spacing:-0.19px"> </i><i style="letter-spacing:-0.29px">SQLRED</i><i style="letter-spacing:0.36px">I</i><i style="letter-spacing:-0.30px">STERRORCROSSLANG</i></span></div>
<div class="r" style="top:585px"><span class="c1"><i style="letter-spacing:-0.28px">S</i><i style="letter-spacing:0.18px">q</i><i style="letter-spacing:0.33px">l</i><i style="letter-spacing:0.22px">ms</i><i style="letter-spacing:0.41px">ir</i><i style="letter-spacing:0.16px">c</i><i style="letter-spacing:-1.36px;position:relative;top:-2px">_</i><i style="letter-spacing:-0.28px">V</i><i style="letter-spacing:0.18px">a</i><i style="letter-spacing:0.33px">li</i><i style="letter-spacing:0.18px">da</i><i style="letter-spacing:0.41px">t</i><i style="letter-spacing:0.18px">e</i><i style="letter-spacing:-0.28px">A</i><i style="letter-spacing:0.18px">pp</i><i style="letter-spacing:-0.33px">G</i><i style="letter-spacing:0.18px">u</i><i style="letter-spacing:0.33px">i</i><i style="letter-spacing:0.18px">d</i><i style="letter-spacing:-1.36px;position:relative;top:-2px">_</i><i style="letter-spacing:-0.31px">N</i><i style="letter-spacing:0.20px">ewe</i><i style="letter-spacing:0.50px">r</i><i style="letter-spacing:-0.26px">F</i><i style="letter-spacing:0.18px">ound</i><i style="letter-spacing:-1.36px;position:relative;top:-2px">_</i><i style="letter-spacing:-0.13px">64</i></span><span class="c2"><i style="letter-spacing:-0.30px">APPGU</i><i style="letter-spacing:0.36px">I</i><i style="letter-spacing:-0.31px">D</i><i style="letter-spacing:-0.19px"> </i><i style="letter-spacing:-0.30px">AND</i><i style="letter-spacing:-0.19px"> </i><i style="letter-spacing:-0.31px">NEWERFOUND</i><i style="letter-spacing:-0.13px">999893</i><i style="letter-spacing:-0.26px">F</i><i style="letter-spacing:-0.13px">976</i><i style="letter-spacing:-0.28px">BBB</i><i style="letter-spacing:-0.13px">4</i></span></div>
<div class="r" style="top:600px"><span class="c1"><i style="letter-spacing:-0.28px">S</i><i style="letter-spacing:0.18px">q</i><i style="letter-spacing:0.33px">l</i><i style="letter-spacing:0.22px">ms</i><i style="letter-spacing:0.41px">ir</i><i style="letter-spacing:0.16px">c</i><i style="letter-spacing:-1.36px;position:relative;top:-2px">_</i><i style="letter-spacing:-0.31px">R</i><i style="letter-spacing:0.18px">e</i><i style="letter-spacing:0.41px">f</i><i style="letter-spacing:-0.31px">C</i><i style="letter-spacing:0.18px">oun</i><i style="letter-spacing:0.41px">t</i><i style="letter-spacing:-0.28px">A</i><i style="letter-spacing:0.18px">pp</i><i style="letter-spacing:-0.33px">G</i><i style="letter-spacing:0.18px">u</i><i style="letter-spacing:0.33px">i</i><i style="letter-spacing:0.18px">d</i><i style="letter-spacing:-1.36px;position:relative;top:-2px">_</i><i style="letter-spacing:-0.31px">N</i><i style="letter-spacing:0.20px">ewe</i><i style="letter-spacing:0.50px">r</i><i style="letter-spacing:-0.26px">F</i><i style="letter-spacing:0.18px">ound</i><i style="letter-spacing:-1.36px;position:relative;top:-2px">_</i><i style="letter-spacing:-0.13px">64</i></span><span class="c2"><i style="letter-spacing:-0.30px">APPGU</i><i style="letter-spacing:0.36px">I</i><i style="letter-spacing:-0.31px">D</i><i style="letter-spacing:-0.19px"> </i><i style="letter-spacing:-0.30px">AND</i><i style="letter-spacing:-0.19px"> </i><i style="letter-spacing:-0.31px">NEWERFOUND</i><i style="letter-spacing:-0.13px">999893</i><i style="letter-spacing:-0.26px">F</i><i style="letter-spacing:-0.13px">976</i><i style="letter-spacing:-0.28px">BBB</i><i style="letter-spacing:-0.13px">4</i></span></div>
<div class="r" style="top:615px"><span class="c1"><i style="letter-spacing:-0.28px">S</i><i style="letter-spacing:0.18px">q</i><i style="letter-spacing:0.33px">l</i><i style="letter-spacing:0.22px">ms</i><i style="letter-spacing:0.41px">ir</i><i style="letter-spacing:0.16px">c</i><i style="letter-spacing:-1.36px;position:relative;top:-2px">_</i><i style="letter-spacing:-0.28px">B</i><i style="letter-spacing:0.17px">ackup</i><i style="letter-spacing:-0.28px">A</i><i style="letter-spacing:0.18px">pp</i><i style="letter-spacing:-0.33px">G</i><i style="letter-spacing:0.18px">u</i><i style="letter-spacing:0.33px">i</i><i style="letter-spacing:0.18px">d</i><i style="letter-spacing:-1.36px;position:relative;top:-2px">_</i><i style="letter-spacing:-0.31px">N</i><i style="letter-spacing:0.20px">ewe</i><i style="letter-spacing:0.50px">r</i><i style="letter-spacing:-0.26px">F</i><i style="letter-spacing:0.18px">ound</i><i style="letter-spacing:-1.36px;position:relative;top:-2px">_</i><i style="letter-spacing:-0.13px">64</i></span><span class="c2"><i style="letter-spacing:-0.30px">APPGU</i><i style="letter-spacing:0.36px">I</i><i style="letter-spacing:-0.31px">D</i><i style="letter-spacing:-0.19px"> </i><i style="letter-spacing:-0.30px">AND</i><i style="letter-spacing:-0.19px"> </i><i style="letter-spacing:-0.31px">NEWERFOUND</i><i style="letter-spacing:-0.13px">999893</i><i style="letter-spacing:-0.26px">F</i><i style="letter-spacing:-0.13px">976</i><i style="letter-spacing:-0.28px">BBB</i><i style="letter-spacing:-0.13px">4</i></span></div>
<div class="r" style="top:630px"><span class="c1"><i style="letter-spacing:-0.28px">S</i><i style="letter-spacing:0.18px">q</i><i style="letter-spacing:0.33px">l</i><i style="letter-spacing:0.22px">ms</i><i style="letter-spacing:0.41px">ir</i><i style="letter-spacing:0.16px">c</i><i style="letter-spacing:-1.36px;position:relative;top:-2px">_</i><i style="letter-spacing:-0.31px">R</i><i style="letter-spacing:0.18px">eg</i><i style="letter-spacing:0.33px">i</i><i style="letter-spacing:0.16px">s</i><i style="letter-spacing:0.41px">t</i><i style="letter-spacing:0.18px">e</i><i style="letter-spacing:0.50px">r</i><i style="letter-spacing:-0.28px">A</i><i style="letter-spacing:0.18px">pp</i><i style="letter-spacing:-0.33px">G</i><i style="letter-spacing:0.18px">u</i><i style="letter-spacing:0.33px">i</i><i style="letter-spacing:0.18px">d</i><i style="letter-spacing:-1.36px;position:relative;top:-2px">_</i><i style="letter-spacing:-0.31px">N</i><i style="letter-spacing:0.20px">ewe</i><i style="letter-spacing:0.50px">r</i><i style="letter-spacing:-0.26px">F</i><i style="letter-spacing:0.18px">ound</i><i style="letter-spacing:-1.36px;position:relative;top:-2px">_</i><i style="letter-spacing:-0.13px">64</i></span><span class="c2"><i style="letter-spacing:-0.30px">APPGU</i><i style="letter-spacing:0.36px">I</i><i style="letter-spacing:-0.31px">D</i><i style="letter-spacing:-0.19px"> </i><i style="letter-spacing:-0.30px">AND</i><i style="letter-spacing:-0.19px"> </i><i style="letter-spacing:-0.31px">NEWERFOUND</i><i style="letter-spacing:-0.13px">999893</i><i style="letter-spacing:-0.26px">F</i><i style="letter-spacing:-0.13px">976</i><i style="letter-spacing:-0.28px">BBB</i><i style="letter-spacing:-0.13px">4</i></span></div>
<div class="r" style="top:645px"><span class="c1"><i style="letter-spacing:-0.28px">S</i><i style="letter-spacing:0.18px">q</i><i style="letter-spacing:0.33px">l</i><i style="letter-spacing:0.22px">ms</i><i style="letter-spacing:0.41px">ir</i><i style="letter-spacing:0.16px">c</i><i style="letter-spacing:-1.36px;position:relative;top:-2px">_</i><i style="letter-spacing:-0.31px">R</i><i style="letter-spacing:0.17px">es</i><i style="letter-spacing:0.41px">t</i><i style="letter-spacing:0.18px">o</i><i style="letter-spacing:0.50px">r</i><i style="letter-spacing:0.18px">e</i><i style="letter-spacing:-0.28px">A</i><i style="letter-spacing:0.18px">pp</i><i style="letter-spacing:-0.33px">G</i><i style="letter-spacing:0.18px">u</i><i style="letter-spacing:0.33px">i</i><i style="letter-spacing:0.18px">d</i><i style="letter-spacing:-1.36px;position:relative;top:-2px">_</i><i style="letter-spacing:-0.31px">N</i><i style="letter-spacing:0.20px">ewe</i><i style="letter-spacing:0.50px">r</i><i style="letter-spacing:-0.26px">F</i><i style="letter-spacing:0.18px">ound</i><i style="letter-spacing:-1.36px;position:relative;top:-2px">_</i><i style="letter-spacing:-0.13px">64</i></span><span class="c2"><i style="letter-spacing:-0.30px">APPGU</i><i style="letter-spacing:0.36px">I</i><i style="letter-spacing:-0.31px">D</i><i style="letter-spacing:-0.19px"> </i><i style="letter-spacing:-0.30px">AND</i><i style="letter-spacing:-0.19px"> </i><i style="letter-spacing:-0.31px">NEWERFOUND</i><i style="letter-spacing:-0.13px">999893</i><i style="letter-spacing:-0.26px">F</i><i style="letter-spacing:-0.13px">976</i><i style="letter-spacing:-0.28px">BBB</i><i style="letter-spacing:-0.13px">4</i></span></div>
  <div class="vgrid" style="left:528px"></div>
</div></div>
<div class="a" style="left:4px;top:75px;width:1002px;height:1px;background:#a0a0a0"></div>
<div class="a" style="left:5px;top:76px;width:1001px;height:1px;background:#696969"></div>
<div id="sb3" class="a"></div>
<div id="sb4" class="a"></div>
<div id="sb" class="a"><span style="left:2px;letter-spacing:0.35px">Tables: 41</span><span style="left:200px;letter-spacing:0.14px">InstallExecuteSequence - 99 rows</span></div>
</body></html>
